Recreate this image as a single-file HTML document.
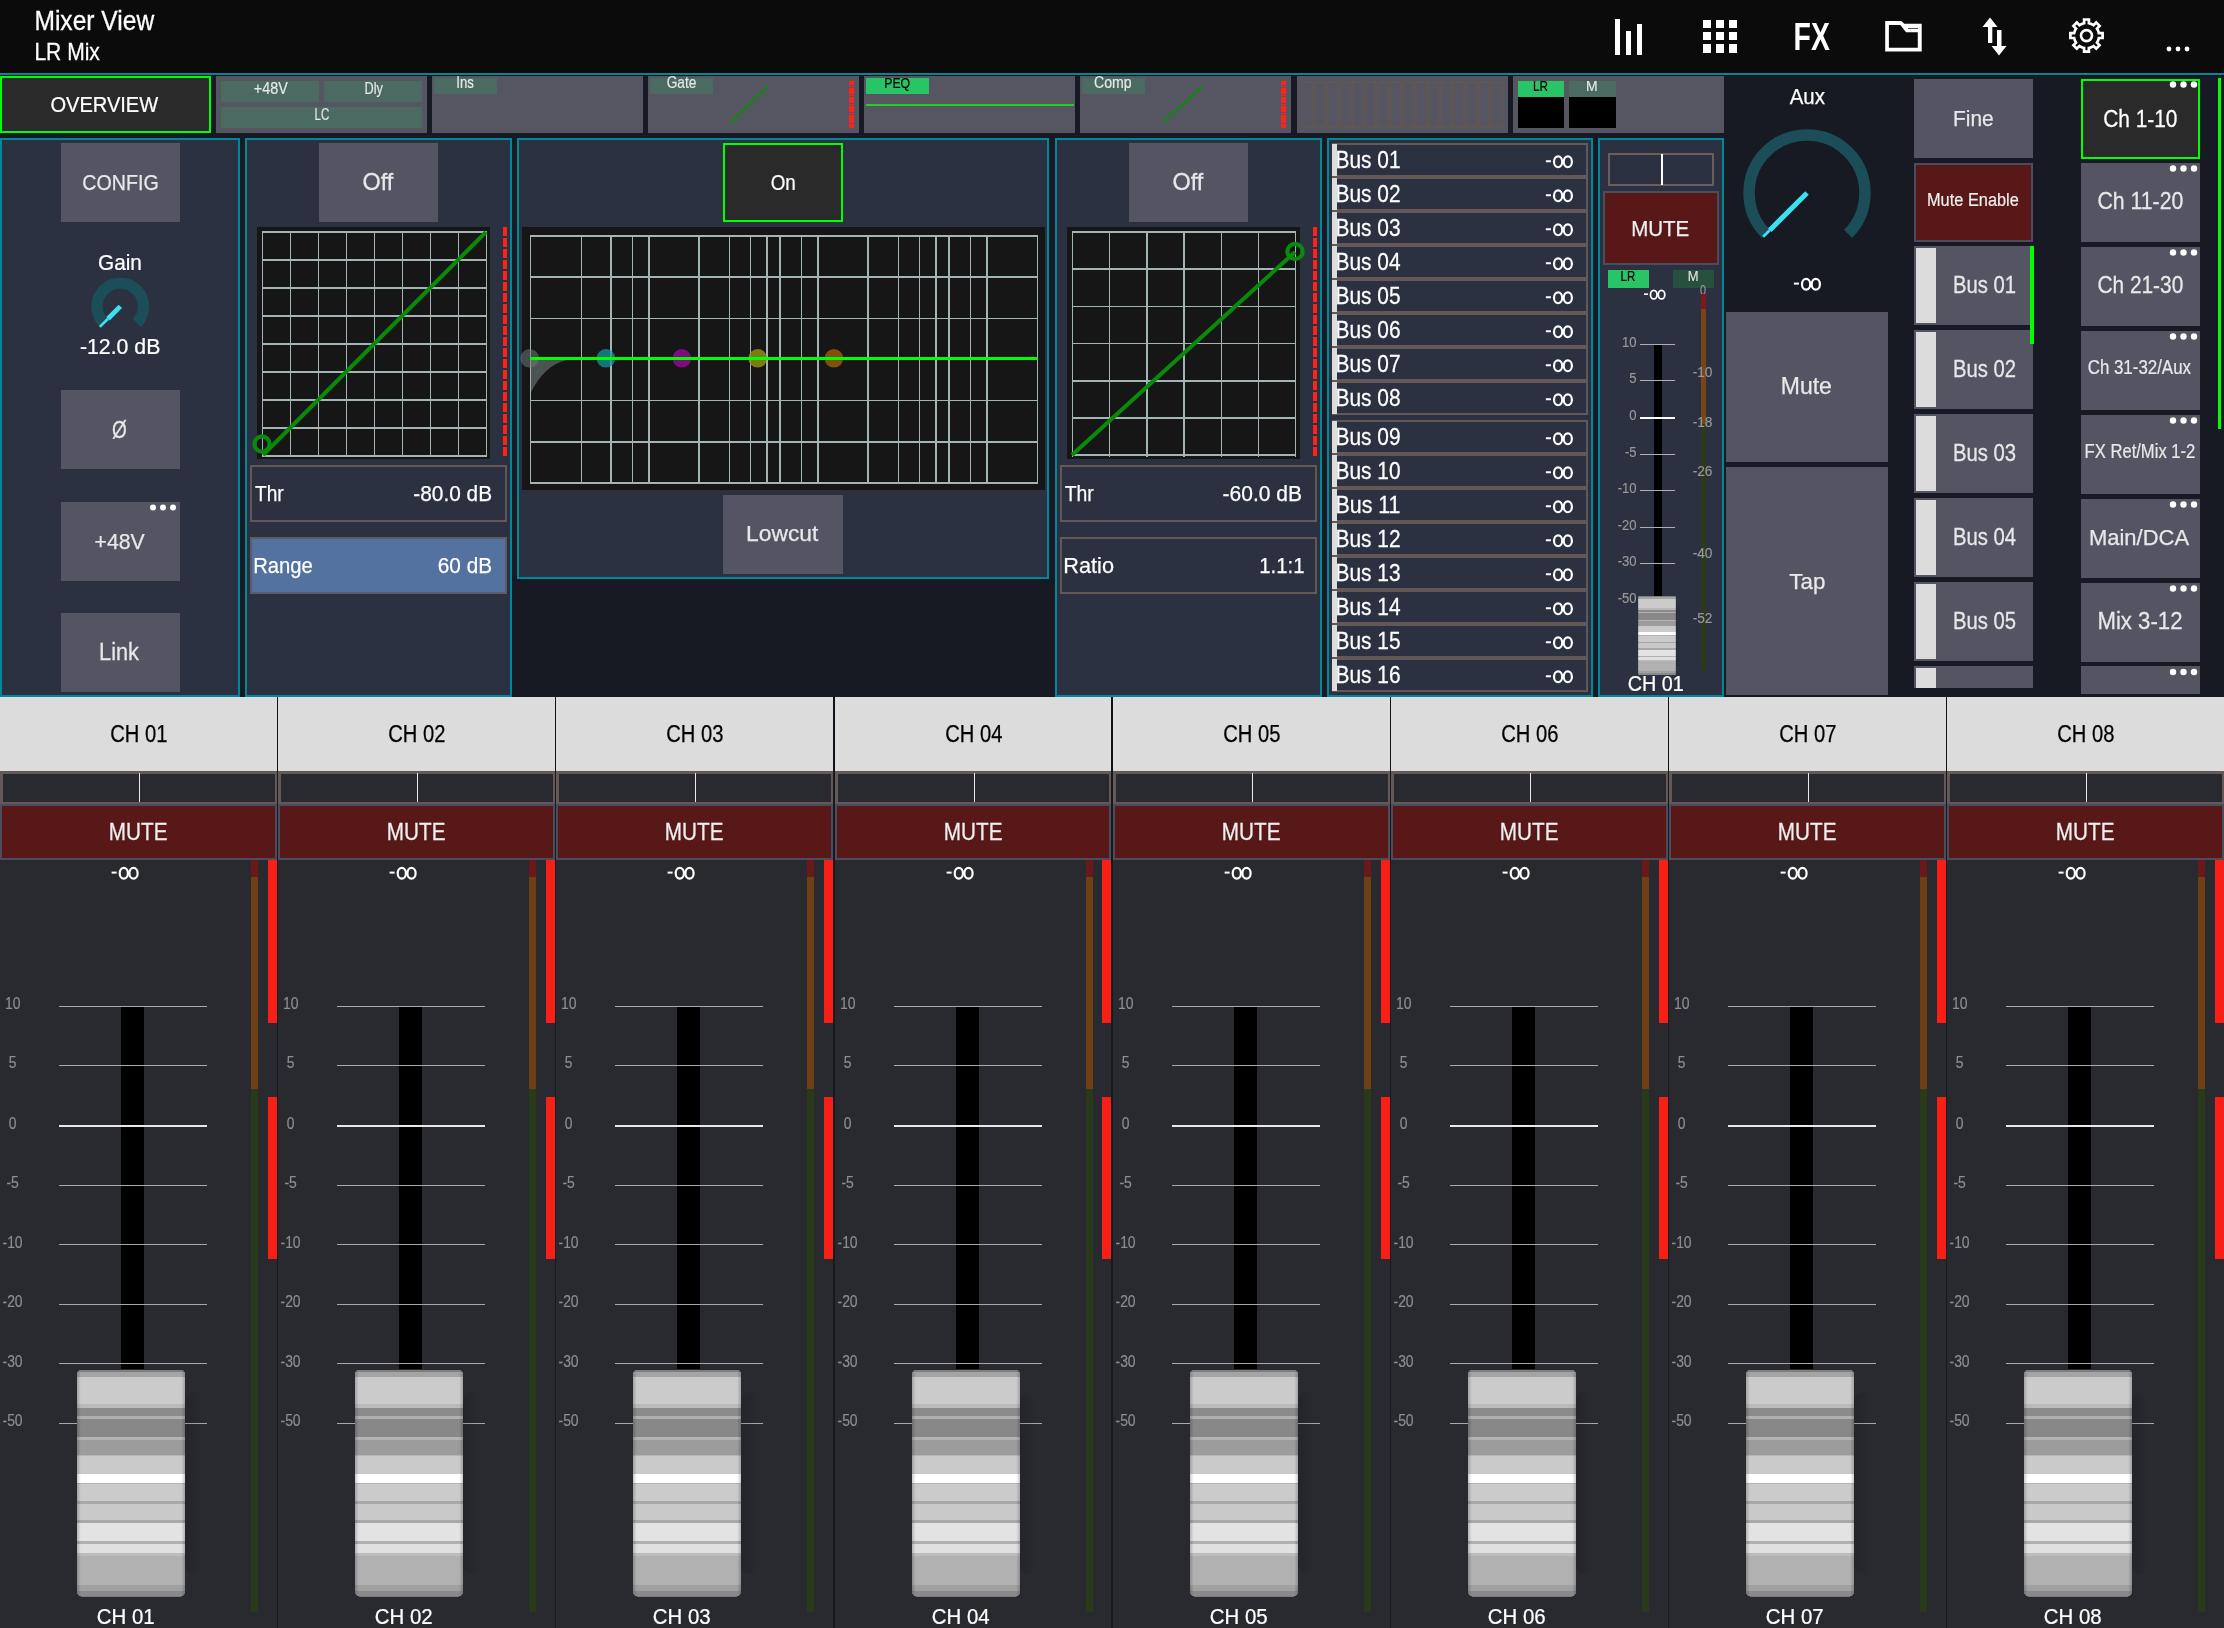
<!DOCTYPE html>
<html><head><meta charset="utf-8"><title>Mixer View</title>
<style>
html,body{margin:0;padding:0;background:#171a22;overflow:hidden;}
svg{display:block;font-family:"Liberation Sans",sans-serif;will-change:transform;}
rect{shape-rendering:crispEdges;}
</style></head><body>
<svg width="2224" height="1628" viewBox="0 0 2224 1628">
<defs><linearGradient id="shd" x1="0" x2="1" y1="0" y2="0"><stop offset="0" stop-color="#000" stop-opacity="0.12"/><stop offset="1" stop-color="#000" stop-opacity="0"/></linearGradient><linearGradient id="kedge" x1="0" x2="1" y1="0" y2="0"><stop offset="0" stop-color="#000" stop-opacity="0.2"/><stop offset="0.035" stop-color="#000" stop-opacity="0"/><stop offset="0.965" stop-color="#000" stop-opacity="0"/><stop offset="1" stop-color="#000" stop-opacity="0.2"/></linearGradient></defs>
<g>
<rect x="0" y="0" width="2224" height="1628" fill="#171a22" />
<rect x="0" y="0" width="2224" height="73" fill="#0b0b0b" />
<rect x="0" y="73" width="2224" height="2" fill="#01879a" />
<rect x="0" y="75" width="2224" height="1" fill="#0b0b0b" />
<text x="34.4" y="29.9" font-size="27.76" fill="#fff" stroke="#fff" stroke-width="0.30" textLength="119.8" lengthAdjust="spacingAndGlyphs">Mixer View</text>
<text x="34.4" y="60.0" font-size="23.40" fill="#fff" stroke="#fff" stroke-width="0.26" textLength="65.5" lengthAdjust="spacingAndGlyphs">LR Mix</text>
<rect x="1615" y="19" width="5" height="36" fill="#fff" />
<rect x="1626" y="31" width="5" height="24" fill="#fff" />
<rect x="1637" y="24" width="5" height="31" fill="#fff" />
<rect x="1703" y="20.0" width="8" height="8.2" fill="#fff" />
<rect x="1716" y="20.0" width="8" height="8.2" fill="#fff" />
<rect x="1729" y="20.0" width="8" height="8.2" fill="#fff" />
<rect x="1703" y="32.2" width="8" height="8.2" fill="#fff" />
<rect x="1716" y="32.2" width="8" height="8.2" fill="#fff" />
<rect x="1729" y="32.2" width="8" height="8.2" fill="#fff" />
<rect x="1703" y="44.4" width="8" height="8.2" fill="#fff" />
<rect x="1716" y="44.4" width="8" height="8.2" fill="#fff" />
<rect x="1729" y="44.4" width="8" height="8.2" fill="#fff" />
<text x="1793.6" y="49.8" font-size="38.95" fill="#fff" textLength="36.2" lengthAdjust="spacingAndGlyphs" font-weight="bold">FX</text>
<path fill-rule="evenodd" fill="#fff" d="M1885.2 21.1 L1901.4 21.1 L1904.3 23.8 L1921.7 23.8 L1921.7 51.6 L1885.2 51.6 Z M1888.9 24.9 L1900.4 24.9 L1906 32.3 L1917.8 32.3 L1917.8 47.8 L1888.9 47.8 Z"/>
<rect x="1908" y="27.8" width="10" height="1.2" fill="#555"/>
<path d="M1990 17.5 L1997.5 27 H1992.3 V43 H1988 V27 H1982.5 Z" fill="#fff"/>
<path d="M1999 55.5 L2006.5 46 H2001.5 V30 H1997 V46 H1991.5 Z" fill="#fff"/>
<path d="M2084.10 23.23 L2084.10 19.50 L2088.90 19.50 L2088.90 23.23 A12.6 12.6 0 0 1 2093.55 25.16 L2096.19 22.52 L2099.58 25.91 L2096.94 28.55 A12.6 12.6 0 0 1 2098.87 33.20 L2102.60 33.20 L2102.60 38.00 L2098.87 38.00 A12.6 12.6 0 0 1 2096.94 42.65 L2099.58 45.29 L2096.19 48.68 L2093.55 46.04 A12.6 12.6 0 0 1 2088.90 47.97 L2088.90 51.70 L2084.10 51.70 L2084.10 47.97 A12.6 12.6 0 0 1 2079.45 46.04 L2076.81 48.68 L2073.42 45.29 L2076.06 42.65 A12.6 12.6 0 0 1 2074.13 38.00 L2070.40 38.00 L2070.40 33.20 L2074.13 33.20 A12.6 12.6 0 0 1 2076.06 28.55 L2073.42 25.91 L2076.81 22.52 L2079.45 25.16 A12.6 12.6 0 0 1 2084.10 23.23 Z" fill="none" stroke="#fff" stroke-width="2.7" stroke-linejoin="miter"/>
<circle cx="2086.5" cy="35.6" r="5.5" fill="none" stroke="#fff" stroke-width="2.6"/>
<circle cx="2169" cy="49" r="2.4" fill="#fff"/>
<circle cx="2178" cy="49" r="2.4" fill="#fff"/>
<circle cx="2187" cy="49" r="2.4" fill="#fff"/>
<rect x="0" y="76" width="211" height="57" fill="#00ff00" />
<rect x="2" y="78" width="207" height="53" fill="#2a2a2a" />
<text x="50.4" y="111.6" font-size="21.95" fill="#fff" stroke="#fff" stroke-width="0.24" textLength="107.8" lengthAdjust="spacingAndGlyphs">OVERVIEW</text>
<rect x="216" y="76" width="211" height="57" fill="#565663" />
<rect x="432" y="76" width="211" height="57" fill="#565663" />
<rect x="648" y="76" width="211" height="57" fill="#565663" />
<rect x="864" y="76" width="211" height="57" fill="#565663" />
<rect x="1080" y="76" width="211" height="57" fill="#565663" />
<rect x="1297" y="76" width="211" height="57" fill="#565663" />
<rect x="1513" y="76" width="211" height="57" fill="#565663" />
<rect x="221" y="81" width="98" height="21" fill="#4b6b62" />
<rect x="324" y="81" width="98" height="21" fill="#4b6b62" />
<rect x="221" y="107" width="201" height="21" fill="#4b6b62" />
<text x="253.8" y="93.9" font-size="15.70" fill="#e8e8e8" stroke="#e8e8e8" stroke-width="0.17" textLength="33.9" lengthAdjust="spacingAndGlyphs">+48V</text>
<text x="364.6" y="93.9" font-size="15.70" fill="#e8e8e8" stroke="#e8e8e8" stroke-width="0.17" textLength="18.4" lengthAdjust="spacingAndGlyphs">Dly</text>
<text x="314.6" y="120.0" font-size="15.84" fill="#e8e8e8" stroke="#e8e8e8" stroke-width="0.17" textLength="14.8" lengthAdjust="spacingAndGlyphs">LC</text>
<rect x="434" y="78" width="63" height="16" fill="#4b6b62" />
<text x="456.3" y="87.9" font-size="15.70" fill="#e8e8e8" stroke="#e8e8e8" stroke-width="0.17" textLength="17.5" lengthAdjust="spacingAndGlyphs">Ins</text>
<rect x="650" y="78" width="63" height="16" fill="#4b6b62" />
<text x="666.7" y="87.9" font-size="15.70" fill="#e8e8e8" stroke="#e8e8e8" stroke-width="0.17" textLength="29.7" lengthAdjust="spacingAndGlyphs">Gate</text>
<line x1="730" y1="123.5" x2="768" y2="86" stroke="#0a8a0a" stroke-width="2" />
<rect x="849" y="81" width="5" height="4" fill="#ff2216" />
<rect x="849" y="86" width="5" height="1" fill="#ff2216" />
<rect x="849" y="88" width="5" height="6" fill="#ff2216" />
<rect x="849" y="95" width="5" height="1" fill="#ff2216" />
<rect x="849" y="97" width="5" height="6" fill="#ff2216" />
<rect x="849" y="104" width="5" height="1" fill="#ff2216" />
<rect x="849" y="106" width="5" height="6" fill="#ff2216" />
<rect x="849" y="113" width="5" height="1" fill="#ff2216" />
<rect x="849" y="115" width="5" height="8" fill="#ff2216" />
<rect x="849" y="124" width="5" height="4" fill="#ff2216" />
<rect x="866" y="78" width="63" height="16" fill="#28c466" />
<text x="884.2" y="88.2" font-size="15.41" fill="#000" stroke="#000" stroke-width="0.17" textLength="26.0" lengthAdjust="spacingAndGlyphs">PEQ</text>
<rect x="866" y="104" width="208" height="1.6" fill="#1fd41f" />
<rect x="1082" y="78" width="63" height="16" fill="#4b6b62" />
<text x="1094.0" y="87.9" font-size="15.70" fill="#e8e8e8" stroke="#e8e8e8" stroke-width="0.17" textLength="37.7" lengthAdjust="spacingAndGlyphs">Comp</text>
<line x1="1162" y1="123.3" x2="1202.5" y2="86.5" stroke="#0a8a0a" stroke-width="2" />
<rect x="1281" y="81" width="5" height="4" fill="#ff2216" />
<rect x="1281" y="86" width="5" height="1" fill="#ff2216" />
<rect x="1281" y="88" width="5" height="6" fill="#ff2216" />
<rect x="1281" y="95" width="5" height="1" fill="#ff2216" />
<rect x="1281" y="97" width="5" height="6" fill="#ff2216" />
<rect x="1281" y="104" width="5" height="1" fill="#ff2216" />
<rect x="1281" y="106" width="5" height="6" fill="#ff2216" />
<rect x="1281" y="113" width="5" height="1" fill="#ff2216" />
<rect x="1281" y="115" width="5" height="8" fill="#ff2216" />
<rect x="1281" y="124" width="5" height="4" fill="#ff2216" />
<rect x="1302.2" y="82.1" width="10" height="45" fill="none" stroke="#615755" stroke-width="1.8" style="shape-rendering:auto"/>
<rect x="1314.9" y="82.1" width="10" height="45" fill="none" stroke="#615755" stroke-width="1.8" style="shape-rendering:auto"/>
<rect x="1327.5" y="82.1" width="10" height="45" fill="none" stroke="#615755" stroke-width="1.8" style="shape-rendering:auto"/>
<rect x="1340.2" y="82.1" width="10" height="45" fill="none" stroke="#615755" stroke-width="1.8" style="shape-rendering:auto"/>
<rect x="1352.8" y="82.1" width="10" height="45" fill="none" stroke="#615755" stroke-width="1.8" style="shape-rendering:auto"/>
<rect x="1365.5" y="82.1" width="10" height="45" fill="none" stroke="#615755" stroke-width="1.8" style="shape-rendering:auto"/>
<rect x="1378.1" y="82.1" width="10" height="45" fill="none" stroke="#615755" stroke-width="1.8" style="shape-rendering:auto"/>
<rect x="1390.8" y="82.1" width="10" height="45" fill="none" stroke="#615755" stroke-width="1.8" style="shape-rendering:auto"/>
<rect x="1403.4" y="82.1" width="10" height="45" fill="none" stroke="#615755" stroke-width="1.8" style="shape-rendering:auto"/>
<rect x="1416.0" y="82.1" width="10" height="45" fill="none" stroke="#615755" stroke-width="1.8" style="shape-rendering:auto"/>
<rect x="1428.7" y="82.1" width="10" height="45" fill="none" stroke="#615755" stroke-width="1.8" style="shape-rendering:auto"/>
<rect x="1441.4" y="82.1" width="10" height="45" fill="none" stroke="#615755" stroke-width="1.8" style="shape-rendering:auto"/>
<rect x="1454.0" y="82.1" width="10" height="45" fill="none" stroke="#615755" stroke-width="1.8" style="shape-rendering:auto"/>
<rect x="1466.7" y="82.1" width="10" height="45" fill="none" stroke="#615755" stroke-width="1.8" style="shape-rendering:auto"/>
<rect x="1479.3" y="82.1" width="10" height="45" fill="none" stroke="#615755" stroke-width="1.8" style="shape-rendering:auto"/>
<rect x="1492.0" y="82.1" width="10" height="45" fill="none" stroke="#615755" stroke-width="1.8" style="shape-rendering:auto"/>
<rect x="1518" y="81" width="46" height="16" fill="#28c466" />
<rect x="1518" y="97" width="46" height="31" fill="#000" />
<rect x="1569" y="81" width="47" height="16" fill="#4b6b62" />
<rect x="1569" y="97" width="47" height="31" fill="#000" />
<text x="1533.0" y="91.2" font-size="14.97" fill="#000" stroke="#000" stroke-width="0.16" textLength="15.0" lengthAdjust="spacingAndGlyphs">LR</text>
<text x="1586.0" y="91.2" font-size="14.97" fill="#e8e8e8" stroke="#e8e8e8" stroke-width="0.16" textLength="11.6" lengthAdjust="spacingAndGlyphs">M</text>
<rect x="0" y="138" width="240" height="559" fill="#01879a" />
<rect x="2" y="140" width="236" height="555" fill="#2b3140" />
<rect x="245" y="138" width="267" height="559" fill="#01879a" />
<rect x="247" y="140" width="263" height="555" fill="#2b3140" />
<rect x="517" y="138" width="532" height="441" fill="#01879a" />
<rect x="519" y="140" width="528" height="437" fill="#2b3140" />
<rect x="1055" y="138" width="267" height="559" fill="#01879a" />
<rect x="1057" y="140" width="263" height="555" fill="#2b3140" />
<rect x="1327" y="138" width="266" height="559" fill="#01879a" />
<rect x="1329" y="140" width="262" height="555" fill="#2b3140" />
<rect x="1598" y="138" width="126" height="559" fill="#01879a" />
<rect x="1600" y="140" width="122" height="555" fill="#2b3140" />
<rect x="61" y="143" width="119" height="79" fill="#545462" />
<text x="82.3" y="190.2" font-size="22.82" fill="#e8e8e8" stroke="#e8e8e8" stroke-width="0.25" textLength="76.4" lengthAdjust="spacingAndGlyphs">CONFIG</text>
<text x="98.0" y="270.1" font-size="21.95" fill="#fff" stroke="#fff" stroke-width="0.24" textLength="43.9" lengthAdjust="spacingAndGlyphs">Gain</text>
<path d="M103.82 322.88 A23.3 23.3 0 1 1 136.78 322.88" fill="none" stroke="#1b4e58" stroke-width="11.399999999999999"/>
<line x1="120.3" y1="306.4" x2="108.00" y2="318.70" stroke="#3de0f2" stroke-width="4.8"/>
<line x1="108.00" y1="318.70" x2="99.79" y2="326.91" stroke="#3de0f2" stroke-width="2.64"/>
<text x="79.9" y="354.2" font-size="21.95" fill="#fff" stroke="#fff" stroke-width="0.24" textLength="80.5" lengthAdjust="spacingAndGlyphs">-12.0 dB</text>
<rect x="61" y="390" width="119" height="79" fill="#545462" />
<text x="112.0" y="437.5" font-size="24.42" fill="#e8e8e8" stroke="#e8e8e8" stroke-width="0.27" textLength="14.8" lengthAdjust="spacingAndGlyphs">Ø</text>
<rect x="61" y="502" width="119" height="79" fill="#545462" />
<text x="94.6" y="549.3" font-size="22.53" fill="#e8e8e8" stroke="#e8e8e8" stroke-width="0.25" textLength="50.1" lengthAdjust="spacingAndGlyphs">+48V</text>
<circle cx="153" cy="507.5" r="3" fill="#fff"/>
<circle cx="163" cy="507.5" r="3" fill="#fff"/>
<circle cx="173" cy="507.5" r="3" fill="#fff"/>
<rect x="61" y="613" width="119" height="79" fill="#545462" />
<text x="99.1" y="660.0" font-size="23.55" fill="#e8e8e8" stroke="#e8e8e8" stroke-width="0.26" textLength="39.9" lengthAdjust="spacingAndGlyphs">Link</text>
<rect x="319" y="143" width="119" height="79" fill="#545462" />
<text x="362.5" y="190.2" font-size="23.84" fill="#e8e8e8" stroke="#e8e8e8" stroke-width="0.26" textLength="30.8" lengthAdjust="spacingAndGlyphs">Off</text>
<rect x="257" y="227" width="233" height="232" fill="#161616" />
<rect x="261.75" y="231" width="1.5" height="226" fill="#a2b4b4" />
<rect x="289.75" y="231" width="1.5" height="226" fill="#a2b4b4" />
<rect x="317.75" y="231" width="1.5" height="226" fill="#a2b4b4" />
<rect x="345.75" y="231" width="1.5" height="226" fill="#a2b4b4" />
<rect x="373.75" y="231" width="1.5" height="226" fill="#a2b4b4" />
<rect x="401.75" y="231" width="1.5" height="226" fill="#a2b4b4" />
<rect x="429.75" y="231" width="1.5" height="226" fill="#a2b4b4" />
<rect x="457.75" y="231" width="1.5" height="226" fill="#a2b4b4" />
<rect x="485.75" y="231" width="1.5" height="226" fill="#a2b4b4" />
<rect x="262" y="231.25" width="225" height="1.5" fill="#a2b4b4" />
<rect x="262" y="259.25" width="225" height="1.5" fill="#a2b4b4" />
<rect x="262" y="287.25" width="225" height="1.5" fill="#a2b4b4" />
<rect x="262" y="315.25" width="225" height="1.5" fill="#a2b4b4" />
<rect x="262" y="343.25" width="225" height="1.5" fill="#a2b4b4" />
<rect x="262" y="371.25" width="225" height="1.5" fill="#a2b4b4" />
<rect x="262" y="399.25" width="225" height="1.5" fill="#a2b4b4" />
<rect x="262" y="427.25" width="225" height="1.5" fill="#a2b4b4" />
<rect x="262" y="455.25" width="225" height="1.5" fill="#a2b4b4" />
<rect x="503" y="227" width="4" height="9" fill="#ff2216" />
<rect x="503" y="238" width="4" height="9" fill="#ff2216" />
<rect x="503" y="249" width="4" height="9" fill="#ff2216" />
<rect x="503" y="260" width="4" height="9" fill="#ff2216" />
<rect x="503" y="271" width="4" height="9" fill="#ff2216" />
<rect x="503" y="282" width="4" height="9" fill="#ff2216" />
<rect x="503" y="293" width="4" height="9" fill="#ff2216" />
<rect x="503" y="304" width="4" height="9" fill="#ff2216" />
<rect x="503" y="315" width="4" height="9" fill="#ff2216" />
<rect x="503" y="326" width="4" height="9" fill="#ff2216" />
<rect x="503" y="337" width="4" height="9" fill="#ff2216" />
<rect x="503" y="348" width="4" height="9" fill="#ff2216" />
<rect x="503" y="359" width="4" height="9" fill="#ff2216" />
<rect x="503" y="370" width="4" height="9" fill="#ff2216" />
<rect x="503" y="381" width="4" height="9" fill="#ff2216" />
<rect x="503" y="392" width="4" height="9" fill="#ff2216" />
<rect x="503" y="403" width="4" height="9" fill="#ff2216" />
<rect x="503" y="414" width="4" height="9" fill="#ff2216" />
<rect x="503" y="425" width="4" height="9" fill="#ff2216" />
<rect x="503" y="436" width="4" height="9" fill="#ff2216" />
<rect x="503" y="447" width="4" height="9" fill="#ff2216" />
<line x1="263" y1="455" x2="486" y2="232" stroke="#0a8a0a" stroke-width="4" />
<circle cx="262" cy="444" r="7.6" fill="none" stroke="#0a8a0a" stroke-width="4.2"/>
<rect x="250" y="465" width="257" height="57" fill="#645856" />
<rect x="252" y="467" width="253" height="53" fill="#2b3140" />
<text x="255.0" y="501.3" font-size="22.97" fill="#fff" stroke="#fff" stroke-width="0.25" textLength="28.7" lengthAdjust="spacingAndGlyphs">Thr</text>
<text x="413.3" y="501.3" font-size="22.97" fill="#fff" stroke="#fff" stroke-width="0.25" textLength="78.8" lengthAdjust="spacingAndGlyphs">-80.0 dB</text>
<rect x="250" y="537" width="257" height="57" fill="#5f5a66" />
<rect x="252" y="539" width="253" height="53" fill="#5472a0" />
<text x="253.2" y="573.1" font-size="22.97" fill="#fff" stroke="#fff" stroke-width="0.25" textLength="59.6" lengthAdjust="spacingAndGlyphs">Range</text>
<text x="437.8" y="573.1" font-size="22.97" fill="#fff" stroke="#fff" stroke-width="0.25" textLength="54.3" lengthAdjust="spacingAndGlyphs">60 dB</text>
<rect x="723" y="143" width="120" height="79" fill="#00ff00" />
<rect x="725" y="145" width="116" height="75" fill="#2a2a2a" />
<text x="770.7" y="190.0" font-size="22.24" fill="#fff" stroke="#fff" stroke-width="0.24" textLength="25.1" lengthAdjust="spacingAndGlyphs">On</text>
<rect x="521.5" y="227" width="523.5" height="263" fill="#161616" />
<rect x="529.75" y="235" width="1.5" height="249" fill="#a2b4b4" />
<rect x="580.75" y="235" width="1.5" height="249" fill="#a2b4b4" />
<rect x="610.25" y="235" width="1.5" height="249" fill="#a2b4b4" />
<rect x="631.75" y="235" width="1.5" height="249" fill="#a2b4b4" />
<rect x="648.25" y="235" width="1.5" height="249" fill="#a2b4b4" />
<rect x="698.25" y="235" width="1.5" height="249" fill="#a2b4b4" />
<rect x="728.65" y="235" width="1.5" height="249" fill="#a2b4b4" />
<rect x="749.75" y="235" width="1.5" height="249" fill="#a2b4b4" />
<rect x="766.15" y="235" width="1.5" height="249" fill="#a2b4b4" />
<rect x="779.25" y="235" width="1.5" height="249" fill="#a2b4b4" />
<rect x="800.55" y="235" width="1.5" height="249" fill="#a2b4b4" />
<rect x="817.35" y="235" width="1.5" height="249" fill="#a2b4b4" />
<rect x="867.45" y="235" width="1.5" height="249" fill="#a2b4b4" />
<rect x="897.75" y="235" width="1.5" height="249" fill="#a2b4b4" />
<rect x="918.65" y="235" width="1.5" height="249" fill="#a2b4b4" />
<rect x="935.05" y="235" width="1.5" height="249" fill="#a2b4b4" />
<rect x="948.35" y="235" width="1.5" height="249" fill="#a2b4b4" />
<rect x="969.95" y="235" width="1.5" height="249" fill="#a2b4b4" />
<rect x="986.25" y="235" width="1.5" height="249" fill="#a2b4b4" />
<rect x="1036.55" y="235" width="1.5" height="249" fill="#a2b4b4" />
<rect x="530" y="235.25" width="508" height="1.5" fill="#a2b4b4" />
<rect x="530" y="276.45" width="508" height="1.5" fill="#a2b4b4" />
<rect x="530" y="317.75" width="508" height="1.5" fill="#a2b4b4" />
<rect x="530" y="358.75" width="508" height="1.5" fill="#a2b4b4" />
<rect x="530" y="399.75" width="508" height="1.5" fill="#a2b4b4" />
<rect x="530" y="441.05" width="508" height="1.5" fill="#a2b4b4" />
<rect x="530" y="482.25" width="508" height="1.5" fill="#a2b4b4" />
<path d="M531 360 L567 360 C550 364 540 375 531 392 Z" fill="#4c5453"/>
<circle cx="529.7" cy="358.3" r="9.3" fill="rgba(110,120,120,0.55)"/>
<circle cx="605.9" cy="358.3" r="9.3" fill="rgba(20,150,160,0.75)"/>
<circle cx="681.8" cy="358.3" r="9.3" fill="rgba(140,10,140,0.9)"/>
<circle cx="757.7" cy="358.3" r="9.3" fill="rgba(150,150,20,0.8)"/>
<circle cx="833.9" cy="358.3" r="9.3" fill="rgba(150,90,10,0.85)"/>
<rect x="530" y="357" width="508" height="3" fill="#00ff00" />
<rect x="723" y="495" width="120" height="79" fill="#545462" />
<text x="746.1" y="541.4" font-size="22.38" fill="#e8e8e8" stroke="#e8e8e8" stroke-width="0.25" textLength="72.2" lengthAdjust="spacingAndGlyphs">Lowcut</text>
<rect x="1129" y="143" width="119" height="79" fill="#545462" />
<text x="1172.5" y="190.2" font-size="23.84" fill="#e8e8e8" stroke="#e8e8e8" stroke-width="0.26" textLength="30.8" lengthAdjust="spacingAndGlyphs">Off</text>
<rect x="1067" y="227" width="233" height="232" fill="#161616" />
<rect x="1071.75" y="231" width="1.5" height="226" fill="#a2b4b4" />
<rect x="1108.95" y="231" width="1.5" height="226" fill="#a2b4b4" />
<rect x="1146.15" y="231" width="1.5" height="226" fill="#a2b4b4" />
<rect x="1183.35" y="231" width="1.5" height="226" fill="#a2b4b4" />
<rect x="1220.55" y="231" width="1.5" height="226" fill="#a2b4b4" />
<rect x="1257.75" y="231" width="1.5" height="226" fill="#a2b4b4" />
<rect x="1294.95" y="231" width="1.5" height="226" fill="#a2b4b4" />
<rect x="1072" y="231.25" width="224" height="1.5" fill="#a2b4b4" />
<rect x="1072" y="268.45" width="224" height="1.5" fill="#a2b4b4" />
<rect x="1072" y="305.65" width="224" height="1.5" fill="#a2b4b4" />
<rect x="1072" y="342.85" width="224" height="1.5" fill="#a2b4b4" />
<rect x="1072" y="380.05" width="224" height="1.5" fill="#a2b4b4" />
<rect x="1072" y="417.25" width="224" height="1.5" fill="#a2b4b4" />
<rect x="1072" y="454.45000000000005" width="224" height="1.5" fill="#a2b4b4" />
<rect x="1312.5" y="227" width="4" height="9" fill="#ff2216" />
<rect x="1312.5" y="238" width="4" height="9" fill="#ff2216" />
<rect x="1312.5" y="249" width="4" height="9" fill="#ff2216" />
<rect x="1312.5" y="260" width="4" height="9" fill="#ff2216" />
<rect x="1312.5" y="271" width="4" height="9" fill="#ff2216" />
<rect x="1312.5" y="282" width="4" height="9" fill="#ff2216" />
<rect x="1312.5" y="293" width="4" height="9" fill="#ff2216" />
<rect x="1312.5" y="304" width="4" height="9" fill="#ff2216" />
<rect x="1312.5" y="315" width="4" height="9" fill="#ff2216" />
<rect x="1312.5" y="326" width="4" height="9" fill="#ff2216" />
<rect x="1312.5" y="337" width="4" height="9" fill="#ff2216" />
<rect x="1312.5" y="348" width="4" height="9" fill="#ff2216" />
<rect x="1312.5" y="359" width="4" height="9" fill="#ff2216" />
<rect x="1312.5" y="370" width="4" height="9" fill="#ff2216" />
<rect x="1312.5" y="381" width="4" height="9" fill="#ff2216" />
<rect x="1312.5" y="392" width="4" height="9" fill="#ff2216" />
<rect x="1312.5" y="403" width="4" height="9" fill="#ff2216" />
<rect x="1312.5" y="414" width="4" height="9" fill="#ff2216" />
<rect x="1312.5" y="425" width="4" height="9" fill="#ff2216" />
<rect x="1312.5" y="436" width="4" height="9" fill="#ff2216" />
<rect x="1312.5" y="447" width="4" height="9" fill="#ff2216" />
<line x1="1072" y1="455" x2="1295" y2="252" stroke="#0a8a0a" stroke-width="4" />
<circle cx="1295" cy="251.5" r="7.6" fill="none" stroke="#0a8a0a" stroke-width="4.2"/>
<rect x="1060" y="465" width="257" height="57" fill="#645856" />
<rect x="1062" y="467" width="253" height="53" fill="#2b3140" />
<text x="1064.7" y="501.0" font-size="22.82" fill="#fff" stroke="#fff" stroke-width="0.25" textLength="29.1" lengthAdjust="spacingAndGlyphs">Thr</text>
<text x="1222.6" y="501.0" font-size="22.82" fill="#fff" stroke="#fff" stroke-width="0.25" textLength="79.4" lengthAdjust="spacingAndGlyphs">-60.0 dB</text>
<rect x="1060" y="537" width="257" height="57" fill="#645856" />
<rect x="1062" y="539" width="253" height="53" fill="#2b3140" />
<text x="1063.3" y="572.8" font-size="22.97" fill="#fff" stroke="#fff" stroke-width="0.25" textLength="50.7" lengthAdjust="spacingAndGlyphs">Ratio</text>
<text x="1259.3" y="572.8" font-size="22.97" fill="#fff" stroke="#fff" stroke-width="0.25" textLength="45.2" lengthAdjust="spacingAndGlyphs">1.1:1</text>
<rect x="1332" y="143" width="256" height="34" fill="#645856" />
<rect x="1334" y="145" width="252" height="30" fill="#2b3140" />
<rect x="1332" y="144" width="5" height="32" fill="#dcdcdc" />
<text x="1335.5" y="168.2" font-size="23.55" fill="#fff" stroke="#fff" stroke-width="0.26" textLength="65.0" lengthAdjust="spacingAndGlyphs">Bus 01</text>
<rect x="1545.90" y="160.25" width="5.00" height="2.00" fill="#fff" style="shape-rendering:auto"/>
<ellipse cx="1558.10" cy="161.85" rx="4.10" ry="5.40" fill="none" stroke="#fff" stroke-width="2.20"/>
<ellipse cx="1567.80" cy="161.85" rx="4.10" ry="5.40" fill="none" stroke="#fff" stroke-width="2.20"/>
<rect x="1332" y="177" width="256" height="34" fill="#645856" />
<rect x="1334" y="179" width="252" height="30" fill="#2b3140" />
<rect x="1332" y="178" width="5" height="32" fill="#dcdcdc" />
<text x="1335.5" y="202.2" font-size="23.55" fill="#fff" stroke="#fff" stroke-width="0.26" textLength="65.0" lengthAdjust="spacingAndGlyphs">Bus 02</text>
<rect x="1545.90" y="194.25" width="5.00" height="2.00" fill="#fff" style="shape-rendering:auto"/>
<ellipse cx="1558.10" cy="195.85" rx="4.10" ry="5.40" fill="none" stroke="#fff" stroke-width="2.20"/>
<ellipse cx="1567.80" cy="195.85" rx="4.10" ry="5.40" fill="none" stroke="#fff" stroke-width="2.20"/>
<rect x="1332" y="211" width="256" height="34" fill="#645856" />
<rect x="1334" y="213" width="252" height="30" fill="#2b3140" />
<rect x="1332" y="212" width="5" height="32" fill="#dcdcdc" />
<text x="1335.5" y="236.2" font-size="23.55" fill="#fff" stroke="#fff" stroke-width="0.26" textLength="65.0" lengthAdjust="spacingAndGlyphs">Bus 03</text>
<rect x="1545.90" y="228.25" width="5.00" height="2.00" fill="#fff" style="shape-rendering:auto"/>
<ellipse cx="1558.10" cy="229.85" rx="4.10" ry="5.40" fill="none" stroke="#fff" stroke-width="2.20"/>
<ellipse cx="1567.80" cy="229.85" rx="4.10" ry="5.40" fill="none" stroke="#fff" stroke-width="2.20"/>
<rect x="1332" y="245" width="256" height="34" fill="#645856" />
<rect x="1334" y="247" width="252" height="30" fill="#2b3140" />
<rect x="1332" y="246" width="5" height="32" fill="#dcdcdc" />
<text x="1335.5" y="270.2" font-size="23.55" fill="#fff" stroke="#fff" stroke-width="0.26" textLength="65.0" lengthAdjust="spacingAndGlyphs">Bus 04</text>
<rect x="1545.90" y="262.25" width="5.00" height="2.00" fill="#fff" style="shape-rendering:auto"/>
<ellipse cx="1558.10" cy="263.85" rx="4.10" ry="5.40" fill="none" stroke="#fff" stroke-width="2.20"/>
<ellipse cx="1567.80" cy="263.85" rx="4.10" ry="5.40" fill="none" stroke="#fff" stroke-width="2.20"/>
<rect x="1332" y="279" width="256" height="34" fill="#645856" />
<rect x="1334" y="281" width="252" height="30" fill="#2b3140" />
<rect x="1332" y="280" width="5" height="32" fill="#dcdcdc" />
<text x="1335.5" y="304.2" font-size="23.55" fill="#fff" stroke="#fff" stroke-width="0.26" textLength="65.0" lengthAdjust="spacingAndGlyphs">Bus 05</text>
<rect x="1545.90" y="296.25" width="5.00" height="2.00" fill="#fff" style="shape-rendering:auto"/>
<ellipse cx="1558.10" cy="297.85" rx="4.10" ry="5.40" fill="none" stroke="#fff" stroke-width="2.20"/>
<ellipse cx="1567.80" cy="297.85" rx="4.10" ry="5.40" fill="none" stroke="#fff" stroke-width="2.20"/>
<rect x="1332" y="313" width="256" height="34" fill="#645856" />
<rect x="1334" y="315" width="252" height="30" fill="#2b3140" />
<rect x="1332" y="314" width="5" height="32" fill="#dcdcdc" />
<text x="1335.5" y="338.2" font-size="23.55" fill="#fff" stroke="#fff" stroke-width="0.26" textLength="65.0" lengthAdjust="spacingAndGlyphs">Bus 06</text>
<rect x="1545.90" y="330.25" width="5.00" height="2.00" fill="#fff" style="shape-rendering:auto"/>
<ellipse cx="1558.10" cy="331.85" rx="4.10" ry="5.40" fill="none" stroke="#fff" stroke-width="2.20"/>
<ellipse cx="1567.80" cy="331.85" rx="4.10" ry="5.40" fill="none" stroke="#fff" stroke-width="2.20"/>
<rect x="1332" y="347" width="256" height="34" fill="#645856" />
<rect x="1334" y="349" width="252" height="30" fill="#2b3140" />
<rect x="1332" y="348" width="5" height="32" fill="#dcdcdc" />
<text x="1335.5" y="372.2" font-size="23.55" fill="#fff" stroke="#fff" stroke-width="0.26" textLength="65.0" lengthAdjust="spacingAndGlyphs">Bus 07</text>
<rect x="1545.90" y="364.25" width="5.00" height="2.00" fill="#fff" style="shape-rendering:auto"/>
<ellipse cx="1558.10" cy="365.85" rx="4.10" ry="5.40" fill="none" stroke="#fff" stroke-width="2.20"/>
<ellipse cx="1567.80" cy="365.85" rx="4.10" ry="5.40" fill="none" stroke="#fff" stroke-width="2.20"/>
<rect x="1332" y="381" width="256" height="34" fill="#645856" />
<rect x="1334" y="383" width="252" height="30" fill="#2b3140" />
<rect x="1332" y="382" width="5" height="32" fill="#dcdcdc" />
<text x="1335.5" y="406.2" font-size="23.55" fill="#fff" stroke="#fff" stroke-width="0.26" textLength="65.0" lengthAdjust="spacingAndGlyphs">Bus 08</text>
<rect x="1545.90" y="398.25" width="5.00" height="2.00" fill="#fff" style="shape-rendering:auto"/>
<ellipse cx="1558.10" cy="399.85" rx="4.10" ry="5.40" fill="none" stroke="#fff" stroke-width="2.20"/>
<ellipse cx="1567.80" cy="399.85" rx="4.10" ry="5.40" fill="none" stroke="#fff" stroke-width="2.20"/>
<rect x="1332" y="420" width="256" height="34" fill="#645856" />
<rect x="1334" y="422" width="252" height="30" fill="#2b3140" />
<rect x="1332" y="421" width="5" height="32" fill="#dcdcdc" />
<text x="1335.5" y="445.2" font-size="23.55" fill="#fff" stroke="#fff" stroke-width="0.26" textLength="65.0" lengthAdjust="spacingAndGlyphs">Bus 09</text>
<rect x="1545.90" y="437.25" width="5.00" height="2.00" fill="#fff" style="shape-rendering:auto"/>
<ellipse cx="1558.10" cy="438.85" rx="4.10" ry="5.40" fill="none" stroke="#fff" stroke-width="2.20"/>
<ellipse cx="1567.80" cy="438.85" rx="4.10" ry="5.40" fill="none" stroke="#fff" stroke-width="2.20"/>
<rect x="1332" y="454" width="256" height="34" fill="#645856" />
<rect x="1334" y="456" width="252" height="30" fill="#2b3140" />
<rect x="1332" y="455" width="5" height="32" fill="#dcdcdc" />
<text x="1335.5" y="479.2" font-size="23.55" fill="#fff" stroke="#fff" stroke-width="0.26" textLength="65.0" lengthAdjust="spacingAndGlyphs">Bus 10</text>
<rect x="1545.90" y="471.25" width="5.00" height="2.00" fill="#fff" style="shape-rendering:auto"/>
<ellipse cx="1558.10" cy="472.85" rx="4.10" ry="5.40" fill="none" stroke="#fff" stroke-width="2.20"/>
<ellipse cx="1567.80" cy="472.85" rx="4.10" ry="5.40" fill="none" stroke="#fff" stroke-width="2.20"/>
<rect x="1332" y="488" width="256" height="34" fill="#645856" />
<rect x="1334" y="490" width="252" height="30" fill="#2b3140" />
<rect x="1332" y="489" width="5" height="32" fill="#dcdcdc" />
<text x="1335.5" y="513.2" font-size="23.55" fill="#fff" stroke="#fff" stroke-width="0.26" textLength="65.0" lengthAdjust="spacingAndGlyphs">Bus 11</text>
<rect x="1545.90" y="505.25" width="5.00" height="2.00" fill="#fff" style="shape-rendering:auto"/>
<ellipse cx="1558.10" cy="506.85" rx="4.10" ry="5.40" fill="none" stroke="#fff" stroke-width="2.20"/>
<ellipse cx="1567.80" cy="506.85" rx="4.10" ry="5.40" fill="none" stroke="#fff" stroke-width="2.20"/>
<rect x="1332" y="522" width="256" height="34" fill="#645856" />
<rect x="1334" y="524" width="252" height="30" fill="#2b3140" />
<rect x="1332" y="523" width="5" height="32" fill="#dcdcdc" />
<text x="1335.5" y="547.2" font-size="23.55" fill="#fff" stroke="#fff" stroke-width="0.26" textLength="65.0" lengthAdjust="spacingAndGlyphs">Bus 12</text>
<rect x="1545.90" y="539.25" width="5.00" height="2.00" fill="#fff" style="shape-rendering:auto"/>
<ellipse cx="1558.10" cy="540.85" rx="4.10" ry="5.40" fill="none" stroke="#fff" stroke-width="2.20"/>
<ellipse cx="1567.80" cy="540.85" rx="4.10" ry="5.40" fill="none" stroke="#fff" stroke-width="2.20"/>
<rect x="1332" y="556" width="256" height="34" fill="#645856" />
<rect x="1334" y="558" width="252" height="30" fill="#2b3140" />
<rect x="1332" y="557" width="5" height="32" fill="#dcdcdc" />
<text x="1335.5" y="581.2" font-size="23.55" fill="#fff" stroke="#fff" stroke-width="0.26" textLength="65.0" lengthAdjust="spacingAndGlyphs">Bus 13</text>
<rect x="1545.90" y="573.25" width="5.00" height="2.00" fill="#fff" style="shape-rendering:auto"/>
<ellipse cx="1558.10" cy="574.85" rx="4.10" ry="5.40" fill="none" stroke="#fff" stroke-width="2.20"/>
<ellipse cx="1567.80" cy="574.85" rx="4.10" ry="5.40" fill="none" stroke="#fff" stroke-width="2.20"/>
<rect x="1332" y="590" width="256" height="34" fill="#645856" />
<rect x="1334" y="592" width="252" height="30" fill="#2b3140" />
<rect x="1332" y="591" width="5" height="32" fill="#dcdcdc" />
<text x="1335.5" y="615.2" font-size="23.55" fill="#fff" stroke="#fff" stroke-width="0.26" textLength="65.0" lengthAdjust="spacingAndGlyphs">Bus 14</text>
<rect x="1545.90" y="607.25" width="5.00" height="2.00" fill="#fff" style="shape-rendering:auto"/>
<ellipse cx="1558.10" cy="608.85" rx="4.10" ry="5.40" fill="none" stroke="#fff" stroke-width="2.20"/>
<ellipse cx="1567.80" cy="608.85" rx="4.10" ry="5.40" fill="none" stroke="#fff" stroke-width="2.20"/>
<rect x="1332" y="624" width="256" height="34" fill="#645856" />
<rect x="1334" y="626" width="252" height="30" fill="#2b3140" />
<rect x="1332" y="625" width="5" height="32" fill="#dcdcdc" />
<text x="1335.5" y="649.2" font-size="23.55" fill="#fff" stroke="#fff" stroke-width="0.26" textLength="65.0" lengthAdjust="spacingAndGlyphs">Bus 15</text>
<rect x="1545.90" y="641.25" width="5.00" height="2.00" fill="#fff" style="shape-rendering:auto"/>
<ellipse cx="1558.10" cy="642.85" rx="4.10" ry="5.40" fill="none" stroke="#fff" stroke-width="2.20"/>
<ellipse cx="1567.80" cy="642.85" rx="4.10" ry="5.40" fill="none" stroke="#fff" stroke-width="2.20"/>
<rect x="1332" y="658" width="256" height="34" fill="#645856" />
<rect x="1334" y="660" width="252" height="30" fill="#2b3140" />
<rect x="1332" y="659" width="5" height="32" fill="#dcdcdc" />
<text x="1335.5" y="683.2" font-size="23.55" fill="#fff" stroke="#fff" stroke-width="0.26" textLength="65.0" lengthAdjust="spacingAndGlyphs">Bus 16</text>
<rect x="1545.90" y="675.25" width="5.00" height="2.00" fill="#fff" style="shape-rendering:auto"/>
<ellipse cx="1558.10" cy="676.85" rx="4.10" ry="5.40" fill="none" stroke="#fff" stroke-width="2.20"/>
<ellipse cx="1567.80" cy="676.85" rx="4.10" ry="5.40" fill="none" stroke="#fff" stroke-width="2.20"/>
<rect x="1608" y="153" width="106" height="33" fill="#6b5e5a" />
<rect x="1610" y="155" width="102" height="29" fill="#2b3140" />
<rect x="1661" y="154" width="2" height="31" fill="#fff" />
<rect x="1603" y="191" width="116" height="74" fill="#4b4d5c" />
<rect x="1605" y="193" width="112" height="70" fill="#581818" />
<text x="1631.2" y="235.9" font-size="22.67" fill="#f0f0f0" stroke="#f0f0f0" stroke-width="0.25" textLength="58.1" lengthAdjust="spacingAndGlyphs">MUTE</text>
<rect x="1608" y="270" width="41" height="18" fill="#28c466" />
<rect x="1673" y="270" width="41" height="18" fill="#28503f" />
<text x="1620.5" y="280.9" font-size="14.83" fill="#000" stroke="#000" stroke-width="0.16" textLength="14.7" lengthAdjust="spacingAndGlyphs">LR</text>
<text x="1687.7" y="280.9" font-size="14.83" fill="#e0e0e0" stroke="#e0e0e0" stroke-width="0.16" textLength="10.8" lengthAdjust="spacingAndGlyphs">M</text>
<rect x="1644.00" y="293.37" width="4.00" height="1.60" fill="#fff" style="shape-rendering:auto"/>
<ellipse cx="1653.76" cy="294.65" rx="3.28" ry="4.32" fill="none" stroke="#fff" stroke-width="1.76"/>
<ellipse cx="1661.52" cy="294.65" rx="3.28" ry="4.32" fill="none" stroke="#fff" stroke-width="1.76"/>
<text x="1700.0" y="294.6" font-size="14.24" fill="#999" stroke="#999" stroke-width="0.16" textLength="6.0" lengthAdjust="spacingAndGlyphs">0</text>
<rect x="1701" y="294" width="5" height="15" fill="#7a1a1a" />
<rect x="1701" y="309" width="5" height="115" fill="#7a4416" />
<rect x="1701" y="424" width="5" height="247" fill="#2a3a1c" />
<rect x="1654" y="345" width="8" height="252" fill="#000" />
<rect x="1640" y="344" width="35" height="1" fill="#b0b0b0" />
<text x="1622.0" y="346.8" font-size="14.54" fill="#999" stroke="#999" stroke-width="0.16" textLength="14.6" lengthAdjust="spacingAndGlyphs">10</text>
<rect x="1640" y="380" width="35" height="1" fill="#b0b0b0" />
<text x="1629.3" y="383.1" font-size="14.54" fill="#999" stroke="#999" stroke-width="0.16" textLength="7.3" lengthAdjust="spacingAndGlyphs">5</text>
<rect x="1640" y="416.5" width="35" height="2" fill="#fff" />
<text x="1629.3" y="420.0" font-size="14.54" fill="#999" stroke="#999" stroke-width="0.16" textLength="7.3" lengthAdjust="spacingAndGlyphs">0</text>
<rect x="1640" y="454" width="35" height="1" fill="#b0b0b0" />
<text x="1625.0" y="457.1" font-size="14.54" fill="#999" stroke="#999" stroke-width="0.16" textLength="11.6" lengthAdjust="spacingAndGlyphs">-5</text>
<rect x="1640" y="490" width="35" height="1" fill="#b0b0b0" />
<text x="1617.7" y="493.4" font-size="14.54" fill="#999" stroke="#999" stroke-width="0.16" textLength="18.9" lengthAdjust="spacingAndGlyphs">-10</text>
<rect x="1640" y="527" width="35" height="1" fill="#b0b0b0" />
<text x="1617.7" y="530.3" font-size="14.54" fill="#999" stroke="#999" stroke-width="0.16" textLength="18.9" lengthAdjust="spacingAndGlyphs">-20</text>
<rect x="1640" y="563" width="35" height="1" fill="#b0b0b0" />
<text x="1617.7" y="566.3" font-size="14.54" fill="#999" stroke="#999" stroke-width="0.16" textLength="18.9" lengthAdjust="spacingAndGlyphs">-30</text>
<rect x="1640" y="600" width="35" height="1" fill="#b0b0b0" />
<text x="1617.7" y="602.8" font-size="14.54" fill="#999" stroke="#999" stroke-width="0.16" textLength="18.9" lengthAdjust="spacingAndGlyphs">-50</text>
<text x="1692.7" y="377.0" font-size="14.54" fill="#999" stroke="#999" stroke-width="0.16" textLength="19.8" lengthAdjust="spacingAndGlyphs">-10</text>
<text x="1692.7" y="426.5" font-size="14.54" fill="#999" stroke="#999" stroke-width="0.16" textLength="19.8" lengthAdjust="spacingAndGlyphs">-18</text>
<text x="1692.7" y="476.0" font-size="14.54" fill="#999" stroke="#999" stroke-width="0.16" textLength="19.8" lengthAdjust="spacingAndGlyphs">-26</text>
<text x="1692.7" y="558.0" font-size="14.54" fill="#999" stroke="#999" stroke-width="0.16" textLength="19.8" lengthAdjust="spacingAndGlyphs">-40</text>
<text x="1692.7" y="623.0" font-size="14.54" fill="#999" stroke="#999" stroke-width="0.16" textLength="19.8" lengthAdjust="spacingAndGlyphs">-52</text>
<rect x="1676.0" y="603.9" width="6.1" height="63.2" rx="3.0" fill="url(#shd)" style="shape-rendering:auto"/>
<clipPath id="kc1"><rect x="1638" y="596" width="38" height="79" rx="2.0" style="shape-rendering:auto"/></clipPath>
<g clip-path="url(#kc1)">
<rect x="1638" y="596" width="38" height="79" fill="#b1b1b1"/>
<rect x="1638" y="596.00" width="38" height="1.04" fill="#7e7e7e"/>
<rect x="1638" y="597.04" width="38" height="1.73" fill="#a4a4a4"/>
<rect x="1638" y="598.77" width="38" height="9.18" fill="#cbcbcb"/>
<rect x="1638" y="607.95" width="38" height="1.56" fill="#bababa"/>
<rect x="1638" y="609.51" width="38" height="2.77" fill="#8b8b8b"/>
<rect x="1638" y="612.29" width="38" height="1.04" fill="#b0b0b0"/>
<rect x="1638" y="613.32" width="38" height="6.24" fill="#888888"/>
<rect x="1638" y="619.56" width="38" height="1.04" fill="#b3b3b3"/>
<rect x="1638" y="620.60" width="38" height="5.02" fill="#9c9c9c"/>
<rect x="1638" y="625.62" width="38" height="0.52" fill="#b5b5b5"/>
<rect x="1638" y="626.14" width="38" height="6.06" fill="#cacaca"/>
<rect x="1638" y="632.21" width="38" height="3.12" fill="#ffffff"/>
<rect x="1638" y="635.33" width="38" height="0.35" fill="#b5b5b5"/>
<rect x="1638" y="635.67" width="38" height="6.24" fill="#cbcbcb"/>
<rect x="1638" y="641.91" width="38" height="1.04" fill="#a8a8a8"/>
<rect x="1638" y="642.95" width="38" height="5.54" fill="#c9c9c9"/>
<rect x="1638" y="648.49" width="38" height="1.04" fill="#a8a8a8"/>
<rect x="1638" y="649.53" width="38" height="6.06" fill="#e3e3e3"/>
<rect x="1638" y="655.60" width="38" height="1.04" fill="#b0b0b0"/>
<rect x="1638" y="656.64" width="38" height="3.12" fill="#e0e0e0"/>
<rect x="1638" y="659.75" width="38" height="1.04" fill="#bdbdbd"/>
<rect x="1638" y="660.79" width="38" height="10.05" fill="#b1b1b1"/>
<rect x="1638" y="670.84" width="38" height="2.08" fill="#a0a0a0"/>
<rect x="1638" y="672.92" width="38" height="2.08" fill="#8a8a8a"/>
<rect x="1638" y="596" width="38" height="79" fill="url(#kedge)"/>
</g>
<text x="1627.7" y="691.0" font-size="21.37" fill="#fff" stroke="#fff" stroke-width="0.24" textLength="56.1" lengthAdjust="spacingAndGlyphs">CH 01</text>
<text x="1789.7" y="103.8" font-size="22.38" fill="#fff" stroke="#fff" stroke-width="0.25" textLength="35.3" lengthAdjust="spacingAndGlyphs">Aux</text>
<path d="M1766.02 233.88 A57.95 57.95 0 1 1 1847.98 233.88" fill="none" stroke="#1b4e58" stroke-width="11.5"/>
<line x1="1807" y1="192.9" x2="1769.74" y2="230.16" stroke="#3de0f2" stroke-width="5"/>
<line x1="1769.74" y1="230.16" x2="1763.16" y2="236.74" stroke="#3de0f2" stroke-width="2.75"/>
<rect x="1793.90" y="282.60" width="5.00" height="2.00" fill="#fff" style="shape-rendering:auto"/>
<ellipse cx="1806.10" cy="284.20" rx="4.10" ry="5.40" fill="none" stroke="#fff" stroke-width="2.20"/>
<ellipse cx="1815.80" cy="284.20" rx="4.10" ry="5.40" fill="none" stroke="#fff" stroke-width="2.20"/>
<rect x="1726" y="312" width="162" height="150" fill="#545462" />
<text x="1780.8" y="394.3" font-size="23.11" fill="#e8e8e8" stroke="#e8e8e8" stroke-width="0.25" textLength="51.1" lengthAdjust="spacingAndGlyphs">Mute</text>
<rect x="1726" y="467" width="162" height="228" fill="#545462" />
<text x="1789.3" y="588.6" font-size="22.67" fill="#e8e8e8" stroke="#e8e8e8" stroke-width="0.25" textLength="36.0" lengthAdjust="spacingAndGlyphs">Tap</text>
<rect x="1914" y="79" width="119" height="79" fill="#545462" />
<text x="1953.0" y="126.1" font-size="22.53" fill="#e8e8e8" stroke="#e8e8e8" stroke-width="0.25" textLength="40.7" lengthAdjust="spacingAndGlyphs">Fine</text>
<rect x="1914" y="163" width="119" height="79" fill="#4b4d5c" />
<rect x="1916" y="165" width="115" height="75" fill="#581818" />
<text x="1927.0" y="206.2" font-size="19.19" fill="#f0f0f0" stroke="#f0f0f0" stroke-width="0.21" textLength="91.8" lengthAdjust="spacingAndGlyphs">Mute Enable</text>
<rect x="1914" y="246" width="119" height="79" fill="#545462" />
<rect x="1916" y="248" width="20" height="75" fill="#dcdcdc" />
<text x="1953.0" y="293.3" font-size="23.69" fill="#e8e8e8" stroke="#e8e8e8" stroke-width="0.26" textLength="63.1" lengthAdjust="spacingAndGlyphs">Bus 01</text>
<rect x="1914" y="330" width="119" height="79" fill="#545462" />
<rect x="1916" y="332" width="20" height="75" fill="#dcdcdc" />
<text x="1953.0" y="377.3" font-size="23.69" fill="#e8e8e8" stroke="#e8e8e8" stroke-width="0.26" textLength="63.1" lengthAdjust="spacingAndGlyphs">Bus 02</text>
<rect x="1914" y="414" width="119" height="79" fill="#545462" />
<rect x="1916" y="416" width="20" height="75" fill="#dcdcdc" />
<text x="1953.0" y="461.3" font-size="23.69" fill="#e8e8e8" stroke="#e8e8e8" stroke-width="0.26" textLength="63.1" lengthAdjust="spacingAndGlyphs">Bus 03</text>
<rect x="1914" y="498" width="119" height="79" fill="#545462" />
<rect x="1916" y="500" width="20" height="75" fill="#dcdcdc" />
<text x="1953.0" y="545.3" font-size="23.69" fill="#e8e8e8" stroke="#e8e8e8" stroke-width="0.26" textLength="63.1" lengthAdjust="spacingAndGlyphs">Bus 04</text>
<rect x="1914" y="582" width="119" height="79" fill="#545462" />
<rect x="1916" y="584" width="20" height="75" fill="#dcdcdc" />
<text x="1953.0" y="629.3" font-size="23.69" fill="#e8e8e8" stroke="#e8e8e8" stroke-width="0.26" textLength="63.1" lengthAdjust="spacingAndGlyphs">Bus 05</text>
<rect x="1914" y="666" width="119" height="22" fill="#545462" />
<rect x="1916" y="668" width="20" height="20" fill="#dcdcdc" />
<rect x="2029.6" y="246" width="4" height="98" fill="#00ff00" />
<rect x="2081" y="78.5" width="119" height="80.0" fill="#00ff00" />
<rect x="2083" y="80.5" width="115" height="76.0" fill="#2a2a2a" />
<text x="2103.2" y="126.6" font-size="23.55" fill="#fff" stroke="#fff" stroke-width="0.26" textLength="74.3" lengthAdjust="spacingAndGlyphs">Ch 1-10</text>
<circle cx="2173" cy="84.5" r="3.2" fill="#fff"/>
<circle cx="2183.5" cy="84.5" r="3.2" fill="#fff"/>
<circle cx="2194" cy="84.5" r="3.2" fill="#fff"/>
<rect x="2081" y="162.5" width="119" height="79" fill="#545462" />
<text x="2097.4" y="208.8" font-size="23.69" fill="#e8e8e8" stroke="#e8e8e8" stroke-width="0.26" textLength="85.9" lengthAdjust="spacingAndGlyphs">Ch 11-20</text>
<circle cx="2173" cy="168.5" r="3.2" fill="#fff"/>
<circle cx="2183.5" cy="168.5" r="3.2" fill="#fff"/>
<circle cx="2194" cy="168.5" r="3.2" fill="#fff"/>
<rect x="2081" y="246.5" width="119" height="79" fill="#545462" />
<text x="2097.4" y="292.8" font-size="23.69" fill="#e8e8e8" stroke="#e8e8e8" stroke-width="0.26" textLength="85.9" lengthAdjust="spacingAndGlyphs">Ch 21-30</text>
<circle cx="2173" cy="252.5" r="3.2" fill="#fff"/>
<circle cx="2183.5" cy="252.5" r="3.2" fill="#fff"/>
<circle cx="2194" cy="252.5" r="3.2" fill="#fff"/>
<rect x="2081" y="330.5" width="119" height="79" fill="#545462" />
<text x="2087.7" y="374.1" font-size="19.77" fill="#e8e8e8" stroke="#e8e8e8" stroke-width="0.22" textLength="103.3" lengthAdjust="spacingAndGlyphs">Ch 31-32/Aux</text>
<circle cx="2173" cy="336.5" r="3.2" fill="#fff"/>
<circle cx="2183.5" cy="336.5" r="3.2" fill="#fff"/>
<circle cx="2194" cy="336.5" r="3.2" fill="#fff"/>
<rect x="2081" y="414.5" width="119" height="79" fill="#545462" />
<text x="2084.6" y="458.4" font-size="19.62" fill="#e8e8e8" stroke="#e8e8e8" stroke-width="0.22" textLength="110.7" lengthAdjust="spacingAndGlyphs">FX Ret/Mix 1-2</text>
<circle cx="2173" cy="420.5" r="3.2" fill="#fff"/>
<circle cx="2183.5" cy="420.5" r="3.2" fill="#fff"/>
<circle cx="2194" cy="420.5" r="3.2" fill="#fff"/>
<rect x="2081" y="498.5" width="119" height="79" fill="#545462" />
<text x="2088.9" y="544.7" font-size="22.97" fill="#e8e8e8" stroke="#e8e8e8" stroke-width="0.25" textLength="100.2" lengthAdjust="spacingAndGlyphs">Main/DCA</text>
<circle cx="2173" cy="504.5" r="3.2" fill="#fff"/>
<circle cx="2183.5" cy="504.5" r="3.2" fill="#fff"/>
<circle cx="2194" cy="504.5" r="3.2" fill="#fff"/>
<rect x="2081" y="582.5" width="119" height="79" fill="#545462" />
<text x="2097.4" y="628.7" font-size="23.55" fill="#e8e8e8" stroke="#e8e8e8" stroke-width="0.26" textLength="85.1" lengthAdjust="spacingAndGlyphs">Mix 3-12</text>
<circle cx="2173" cy="588.5" r="3.2" fill="#fff"/>
<circle cx="2183.5" cy="588.5" r="3.2" fill="#fff"/>
<circle cx="2194" cy="588.5" r="3.2" fill="#fff"/>
<rect x="2081" y="666" width="119" height="28" fill="#545462" />
<circle cx="2173" cy="672" r="3.2" fill="#fff"/>
<circle cx="2183.5" cy="672" r="3.2" fill="#fff"/>
<circle cx="2194" cy="672" r="3.2" fill="#fff"/>
<rect x="2217.5" y="77.5" width="3.5" height="351" fill="#00ff00" />
<rect x="0" y="697" width="277" height="74" fill="#dcdcdc" />
<text x="110.3" y="742.4" font-size="23.11" fill="#000" stroke="#000" stroke-width="0.25" textLength="57.2" lengthAdjust="spacingAndGlyphs">CH 01</text>
<rect x="0" y="771" width="277" height="33" fill="#655957" />
<rect x="2.5" y="773.5" width="272.0" height="28.0" fill="#282a30" />
<rect x="138.5" y="773" width="1.5" height="29" fill="#e8e8e8" />
<rect x="0" y="804" width="277" height="56" fill="#4b4d5c" />
<rect x="2" y="806" width="273" height="52" fill="#581818" />
<text x="108.8" y="840.3" font-size="23.40" fill="#f0f0f0" stroke="#f0f0f0" stroke-width="0.26" textLength="58.7" lengthAdjust="spacingAndGlyphs">MUTE</text>
<rect x="0" y="860" width="277" height="768" fill="#282a30" />
<rect x="111.60" y="871.60" width="5.00" height="2.00" fill="#fff" style="shape-rendering:auto"/>
<ellipse cx="123.80" cy="873.20" rx="4.10" ry="5.40" fill="none" stroke="#fff" stroke-width="2.20"/>
<ellipse cx="133.50" cy="873.20" rx="4.10" ry="5.40" fill="none" stroke="#fff" stroke-width="2.20"/>
<rect x="251" y="860" width="7" height="17" fill="#6b1818" />
<rect x="251" y="877" width="7" height="212" fill="#6f4016" />
<rect x="251" y="1089" width="7" height="523" fill="#283a1a" />
<rect x="268" y="860" width="9" height="163" fill="#f81f16" />
<rect x="268" y="1097" width="9" height="162" fill="#f81f16" />
<rect x="121" y="1007" width="23" height="362" fill="#000" />
<rect x="59" y="1006" width="148" height="1" fill="#a8a8a8" />
<text x="4.9" y="1009.4" font-size="15.99" fill="#8e8e8e" stroke="#8e8e8e" stroke-width="0.18" textLength="15.5" lengthAdjust="spacingAndGlyphs">10</text>
<rect x="59" y="1065" width="148" height="1" fill="#a8a8a8" />
<text x="8.7" y="1068.4" font-size="15.99" fill="#8e8e8e" stroke="#8e8e8e" stroke-width="0.18" textLength="7.7" lengthAdjust="spacingAndGlyphs">5</text>
<rect x="59" y="1125" width="148" height="2" fill="#e8e8e8" />
<text x="8.7" y="1128.5" font-size="15.99" fill="#8e8e8e" stroke="#8e8e8e" stroke-width="0.18" textLength="7.7" lengthAdjust="spacingAndGlyphs">0</text>
<rect x="59" y="1185" width="148" height="1" fill="#a8a8a8" />
<text x="6.4" y="1188.0" font-size="15.99" fill="#8e8e8e" stroke="#8e8e8e" stroke-width="0.18" textLength="12.4" lengthAdjust="spacingAndGlyphs">-5</text>
<rect x="59" y="1244" width="148" height="1" fill="#a8a8a8" />
<text x="2.5" y="1247.5" font-size="15.99" fill="#8e8e8e" stroke="#8e8e8e" stroke-width="0.18" textLength="20.1" lengthAdjust="spacingAndGlyphs">-10</text>
<rect x="59" y="1304" width="148" height="1" fill="#a8a8a8" />
<text x="2.5" y="1307.0" font-size="15.99" fill="#8e8e8e" stroke="#8e8e8e" stroke-width="0.18" textLength="20.1" lengthAdjust="spacingAndGlyphs">-20</text>
<rect x="59" y="1363" width="148" height="1" fill="#a8a8a8" />
<text x="2.5" y="1366.5" font-size="15.99" fill="#8e8e8e" stroke="#8e8e8e" stroke-width="0.18" textLength="20.1" lengthAdjust="spacingAndGlyphs">-30</text>
<rect x="59" y="1423" width="148" height="1" fill="#a8a8a8" />
<text x="2.5" y="1426.0" font-size="15.99" fill="#8e8e8e" stroke="#8e8e8e" stroke-width="0.18" textLength="20.1" lengthAdjust="spacingAndGlyphs">-50</text>
<rect x="185.0" y="1392.2" width="17.3" height="181.6" rx="8.6" fill="url(#shd)" style="shape-rendering:auto"/>
<clipPath id="kc2"><rect x="77" y="1369.5" width="108" height="227" rx="5.0" style="shape-rendering:auto"/></clipPath>
<g clip-path="url(#kc2)">
<rect x="77" y="1369.5" width="108" height="227" fill="#b1b1b1"/>
<rect x="77" y="1369.50" width="108" height="2.99" fill="#7e7e7e"/>
<rect x="77" y="1372.49" width="108" height="4.98" fill="#a4a4a4"/>
<rect x="77" y="1377.46" width="108" height="26.38" fill="#cbcbcb"/>
<rect x="77" y="1403.85" width="108" height="4.48" fill="#bababa"/>
<rect x="77" y="1408.33" width="108" height="7.96" fill="#8b8b8b"/>
<rect x="77" y="1416.29" width="108" height="2.99" fill="#b0b0b0"/>
<rect x="77" y="1419.28" width="108" height="17.92" fill="#888888"/>
<rect x="77" y="1437.20" width="108" height="2.99" fill="#b3b3b3"/>
<rect x="77" y="1440.19" width="108" height="14.44" fill="#9c9c9c"/>
<rect x="77" y="1454.62" width="108" height="1.49" fill="#b5b5b5"/>
<rect x="77" y="1456.12" width="108" height="17.42" fill="#cacaca"/>
<rect x="77" y="1473.54" width="108" height="8.96" fill="#ffffff"/>
<rect x="77" y="1482.50" width="108" height="1.00" fill="#b5b5b5"/>
<rect x="77" y="1483.50" width="108" height="17.92" fill="#cbcbcb"/>
<rect x="77" y="1501.42" width="108" height="2.99" fill="#a8a8a8"/>
<rect x="77" y="1504.41" width="108" height="15.93" fill="#c9c9c9"/>
<rect x="77" y="1520.34" width="108" height="2.99" fill="#a8a8a8"/>
<rect x="77" y="1523.32" width="108" height="17.42" fill="#e3e3e3"/>
<rect x="77" y="1540.75" width="108" height="2.99" fill="#b0b0b0"/>
<rect x="77" y="1543.73" width="108" height="8.96" fill="#e0e0e0"/>
<rect x="77" y="1552.69" width="108" height="2.99" fill="#bdbdbd"/>
<rect x="77" y="1555.68" width="108" height="28.87" fill="#b1b1b1"/>
<rect x="77" y="1584.55" width="108" height="5.97" fill="#a0a0a0"/>
<rect x="77" y="1590.53" width="108" height="5.97" fill="#8a8a8a"/>
<rect x="77" y="1369.5" width="108" height="227" fill="url(#kedge)"/>
</g>
<text x="96.8" y="1623.8" font-size="22.09" fill="#fff" stroke="#fff" stroke-width="0.24" textLength="57.8" lengthAdjust="spacingAndGlyphs">CH 01</text>
<rect x="278" y="697" width="277" height="74" fill="#dcdcdc" />
<text x="388.3" y="742.4" font-size="23.11" fill="#000" stroke="#000" stroke-width="0.25" textLength="57.2" lengthAdjust="spacingAndGlyphs">CH 02</text>
<rect x="278" y="771" width="277" height="33" fill="#655957" />
<rect x="280.5" y="773.5" width="272.0" height="28.0" fill="#282a30" />
<rect x="416.5" y="773" width="1.5" height="29" fill="#e8e8e8" />
<rect x="278" y="804" width="277" height="56" fill="#4b4d5c" />
<rect x="280" y="806" width="273" height="52" fill="#581818" />
<text x="386.8" y="840.3" font-size="23.40" fill="#f0f0f0" stroke="#f0f0f0" stroke-width="0.26" textLength="58.7" lengthAdjust="spacingAndGlyphs">MUTE</text>
<rect x="278" y="860" width="277" height="768" fill="#282a30" />
<rect x="389.60" y="871.60" width="5.00" height="2.00" fill="#fff" style="shape-rendering:auto"/>
<ellipse cx="401.80" cy="873.20" rx="4.10" ry="5.40" fill="none" stroke="#fff" stroke-width="2.20"/>
<ellipse cx="411.50" cy="873.20" rx="4.10" ry="5.40" fill="none" stroke="#fff" stroke-width="2.20"/>
<rect x="529" y="860" width="7" height="17" fill="#6b1818" />
<rect x="529" y="877" width="7" height="212" fill="#6f4016" />
<rect x="529" y="1089" width="7" height="523" fill="#283a1a" />
<rect x="546" y="860" width="9" height="163" fill="#f81f16" />
<rect x="546" y="1097" width="9" height="162" fill="#f81f16" />
<rect x="399" y="1007" width="23" height="362" fill="#000" />
<rect x="337" y="1006" width="148" height="1" fill="#a8a8a8" />
<text x="282.9" y="1009.4" font-size="15.99" fill="#8e8e8e" stroke="#8e8e8e" stroke-width="0.18" textLength="15.5" lengthAdjust="spacingAndGlyphs">10</text>
<rect x="337" y="1065" width="148" height="1" fill="#a8a8a8" />
<text x="286.7" y="1068.4" font-size="15.99" fill="#8e8e8e" stroke="#8e8e8e" stroke-width="0.18" textLength="7.7" lengthAdjust="spacingAndGlyphs">5</text>
<rect x="337" y="1125" width="148" height="2" fill="#e8e8e8" />
<text x="286.7" y="1128.5" font-size="15.99" fill="#8e8e8e" stroke="#8e8e8e" stroke-width="0.18" textLength="7.7" lengthAdjust="spacingAndGlyphs">0</text>
<rect x="337" y="1185" width="148" height="1" fill="#a8a8a8" />
<text x="284.4" y="1188.0" font-size="15.99" fill="#8e8e8e" stroke="#8e8e8e" stroke-width="0.18" textLength="12.4" lengthAdjust="spacingAndGlyphs">-5</text>
<rect x="337" y="1244" width="148" height="1" fill="#a8a8a8" />
<text x="280.5" y="1247.5" font-size="15.99" fill="#8e8e8e" stroke="#8e8e8e" stroke-width="0.18" textLength="20.1" lengthAdjust="spacingAndGlyphs">-10</text>
<rect x="337" y="1304" width="148" height="1" fill="#a8a8a8" />
<text x="280.5" y="1307.0" font-size="15.99" fill="#8e8e8e" stroke="#8e8e8e" stroke-width="0.18" textLength="20.1" lengthAdjust="spacingAndGlyphs">-20</text>
<rect x="337" y="1363" width="148" height="1" fill="#a8a8a8" />
<text x="280.5" y="1366.5" font-size="15.99" fill="#8e8e8e" stroke="#8e8e8e" stroke-width="0.18" textLength="20.1" lengthAdjust="spacingAndGlyphs">-30</text>
<rect x="337" y="1423" width="148" height="1" fill="#a8a8a8" />
<text x="280.5" y="1426.0" font-size="15.99" fill="#8e8e8e" stroke="#8e8e8e" stroke-width="0.18" textLength="20.1" lengthAdjust="spacingAndGlyphs">-50</text>
<rect x="463.0" y="1392.2" width="17.3" height="181.6" rx="8.6" fill="url(#shd)" style="shape-rendering:auto"/>
<clipPath id="kc3"><rect x="355" y="1369.5" width="108" height="227" rx="5.0" style="shape-rendering:auto"/></clipPath>
<g clip-path="url(#kc3)">
<rect x="355" y="1369.5" width="108" height="227" fill="#b1b1b1"/>
<rect x="355" y="1369.50" width="108" height="2.99" fill="#7e7e7e"/>
<rect x="355" y="1372.49" width="108" height="4.98" fill="#a4a4a4"/>
<rect x="355" y="1377.46" width="108" height="26.38" fill="#cbcbcb"/>
<rect x="355" y="1403.85" width="108" height="4.48" fill="#bababa"/>
<rect x="355" y="1408.33" width="108" height="7.96" fill="#8b8b8b"/>
<rect x="355" y="1416.29" width="108" height="2.99" fill="#b0b0b0"/>
<rect x="355" y="1419.28" width="108" height="17.92" fill="#888888"/>
<rect x="355" y="1437.20" width="108" height="2.99" fill="#b3b3b3"/>
<rect x="355" y="1440.19" width="108" height="14.44" fill="#9c9c9c"/>
<rect x="355" y="1454.62" width="108" height="1.49" fill="#b5b5b5"/>
<rect x="355" y="1456.12" width="108" height="17.42" fill="#cacaca"/>
<rect x="355" y="1473.54" width="108" height="8.96" fill="#ffffff"/>
<rect x="355" y="1482.50" width="108" height="1.00" fill="#b5b5b5"/>
<rect x="355" y="1483.50" width="108" height="17.92" fill="#cbcbcb"/>
<rect x="355" y="1501.42" width="108" height="2.99" fill="#a8a8a8"/>
<rect x="355" y="1504.41" width="108" height="15.93" fill="#c9c9c9"/>
<rect x="355" y="1520.34" width="108" height="2.99" fill="#a8a8a8"/>
<rect x="355" y="1523.32" width="108" height="17.42" fill="#e3e3e3"/>
<rect x="355" y="1540.75" width="108" height="2.99" fill="#b0b0b0"/>
<rect x="355" y="1543.73" width="108" height="8.96" fill="#e0e0e0"/>
<rect x="355" y="1552.69" width="108" height="2.99" fill="#bdbdbd"/>
<rect x="355" y="1555.68" width="108" height="28.87" fill="#b1b1b1"/>
<rect x="355" y="1584.55" width="108" height="5.97" fill="#a0a0a0"/>
<rect x="355" y="1590.53" width="108" height="5.97" fill="#8a8a8a"/>
<rect x="355" y="1369.5" width="108" height="227" fill="url(#kedge)"/>
</g>
<text x="374.8" y="1623.8" font-size="22.09" fill="#fff" stroke="#fff" stroke-width="0.24" textLength="57.8" lengthAdjust="spacingAndGlyphs">CH 02</text>
<rect x="277" y="697" width="1" height="74" fill="#10131a" />
<rect x="277" y="771" width="1" height="857" fill="#151a21" />
<rect x="556" y="697" width="277" height="74" fill="#dcdcdc" />
<text x="666.3" y="742.4" font-size="23.11" fill="#000" stroke="#000" stroke-width="0.25" textLength="57.2" lengthAdjust="spacingAndGlyphs">CH 03</text>
<rect x="556" y="771" width="277" height="33" fill="#655957" />
<rect x="558.5" y="773.5" width="272.0" height="28.0" fill="#282a30" />
<rect x="694.5" y="773" width="1.5" height="29" fill="#e8e8e8" />
<rect x="556" y="804" width="277" height="56" fill="#4b4d5c" />
<rect x="558" y="806" width="273" height="52" fill="#581818" />
<text x="664.8" y="840.3" font-size="23.40" fill="#f0f0f0" stroke="#f0f0f0" stroke-width="0.26" textLength="58.7" lengthAdjust="spacingAndGlyphs">MUTE</text>
<rect x="556" y="860" width="277" height="768" fill="#282a30" />
<rect x="667.60" y="871.60" width="5.00" height="2.00" fill="#fff" style="shape-rendering:auto"/>
<ellipse cx="679.80" cy="873.20" rx="4.10" ry="5.40" fill="none" stroke="#fff" stroke-width="2.20"/>
<ellipse cx="689.50" cy="873.20" rx="4.10" ry="5.40" fill="none" stroke="#fff" stroke-width="2.20"/>
<rect x="807" y="860" width="7" height="17" fill="#6b1818" />
<rect x="807" y="877" width="7" height="212" fill="#6f4016" />
<rect x="807" y="1089" width="7" height="523" fill="#283a1a" />
<rect x="824" y="860" width="9" height="163" fill="#f81f16" />
<rect x="824" y="1097" width="9" height="162" fill="#f81f16" />
<rect x="677" y="1007" width="23" height="362" fill="#000" />
<rect x="615" y="1006" width="148" height="1" fill="#a8a8a8" />
<text x="560.9" y="1009.4" font-size="15.99" fill="#8e8e8e" stroke="#8e8e8e" stroke-width="0.18" textLength="15.5" lengthAdjust="spacingAndGlyphs">10</text>
<rect x="615" y="1065" width="148" height="1" fill="#a8a8a8" />
<text x="564.7" y="1068.4" font-size="15.99" fill="#8e8e8e" stroke="#8e8e8e" stroke-width="0.18" textLength="7.7" lengthAdjust="spacingAndGlyphs">5</text>
<rect x="615" y="1125" width="148" height="2" fill="#e8e8e8" />
<text x="564.7" y="1128.5" font-size="15.99" fill="#8e8e8e" stroke="#8e8e8e" stroke-width="0.18" textLength="7.7" lengthAdjust="spacingAndGlyphs">0</text>
<rect x="615" y="1185" width="148" height="1" fill="#a8a8a8" />
<text x="562.4" y="1188.0" font-size="15.99" fill="#8e8e8e" stroke="#8e8e8e" stroke-width="0.18" textLength="12.4" lengthAdjust="spacingAndGlyphs">-5</text>
<rect x="615" y="1244" width="148" height="1" fill="#a8a8a8" />
<text x="558.5" y="1247.5" font-size="15.99" fill="#8e8e8e" stroke="#8e8e8e" stroke-width="0.18" textLength="20.1" lengthAdjust="spacingAndGlyphs">-10</text>
<rect x="615" y="1304" width="148" height="1" fill="#a8a8a8" />
<text x="558.5" y="1307.0" font-size="15.99" fill="#8e8e8e" stroke="#8e8e8e" stroke-width="0.18" textLength="20.1" lengthAdjust="spacingAndGlyphs">-20</text>
<rect x="615" y="1363" width="148" height="1" fill="#a8a8a8" />
<text x="558.5" y="1366.5" font-size="15.99" fill="#8e8e8e" stroke="#8e8e8e" stroke-width="0.18" textLength="20.1" lengthAdjust="spacingAndGlyphs">-30</text>
<rect x="615" y="1423" width="148" height="1" fill="#a8a8a8" />
<text x="558.5" y="1426.0" font-size="15.99" fill="#8e8e8e" stroke="#8e8e8e" stroke-width="0.18" textLength="20.1" lengthAdjust="spacingAndGlyphs">-50</text>
<rect x="741.0" y="1392.2" width="17.3" height="181.6" rx="8.6" fill="url(#shd)" style="shape-rendering:auto"/>
<clipPath id="kc4"><rect x="633" y="1369.5" width="108" height="227" rx="5.0" style="shape-rendering:auto"/></clipPath>
<g clip-path="url(#kc4)">
<rect x="633" y="1369.5" width="108" height="227" fill="#b1b1b1"/>
<rect x="633" y="1369.50" width="108" height="2.99" fill="#7e7e7e"/>
<rect x="633" y="1372.49" width="108" height="4.98" fill="#a4a4a4"/>
<rect x="633" y="1377.46" width="108" height="26.38" fill="#cbcbcb"/>
<rect x="633" y="1403.85" width="108" height="4.48" fill="#bababa"/>
<rect x="633" y="1408.33" width="108" height="7.96" fill="#8b8b8b"/>
<rect x="633" y="1416.29" width="108" height="2.99" fill="#b0b0b0"/>
<rect x="633" y="1419.28" width="108" height="17.92" fill="#888888"/>
<rect x="633" y="1437.20" width="108" height="2.99" fill="#b3b3b3"/>
<rect x="633" y="1440.19" width="108" height="14.44" fill="#9c9c9c"/>
<rect x="633" y="1454.62" width="108" height="1.49" fill="#b5b5b5"/>
<rect x="633" y="1456.12" width="108" height="17.42" fill="#cacaca"/>
<rect x="633" y="1473.54" width="108" height="8.96" fill="#ffffff"/>
<rect x="633" y="1482.50" width="108" height="1.00" fill="#b5b5b5"/>
<rect x="633" y="1483.50" width="108" height="17.92" fill="#cbcbcb"/>
<rect x="633" y="1501.42" width="108" height="2.99" fill="#a8a8a8"/>
<rect x="633" y="1504.41" width="108" height="15.93" fill="#c9c9c9"/>
<rect x="633" y="1520.34" width="108" height="2.99" fill="#a8a8a8"/>
<rect x="633" y="1523.32" width="108" height="17.42" fill="#e3e3e3"/>
<rect x="633" y="1540.75" width="108" height="2.99" fill="#b0b0b0"/>
<rect x="633" y="1543.73" width="108" height="8.96" fill="#e0e0e0"/>
<rect x="633" y="1552.69" width="108" height="2.99" fill="#bdbdbd"/>
<rect x="633" y="1555.68" width="108" height="28.87" fill="#b1b1b1"/>
<rect x="633" y="1584.55" width="108" height="5.97" fill="#a0a0a0"/>
<rect x="633" y="1590.53" width="108" height="5.97" fill="#8a8a8a"/>
<rect x="633" y="1369.5" width="108" height="227" fill="url(#kedge)"/>
</g>
<text x="652.8" y="1623.8" font-size="22.09" fill="#fff" stroke="#fff" stroke-width="0.24" textLength="57.8" lengthAdjust="spacingAndGlyphs">CH 03</text>
<rect x="555" y="697" width="1" height="74" fill="#10131a" />
<rect x="555" y="771" width="1" height="857" fill="#151a21" />
<rect x="835" y="697" width="276" height="74" fill="#dcdcdc" />
<text x="945.3" y="742.4" font-size="23.11" fill="#000" stroke="#000" stroke-width="0.25" textLength="57.2" lengthAdjust="spacingAndGlyphs">CH 04</text>
<rect x="835" y="771" width="276" height="33" fill="#655957" />
<rect x="837.5" y="773.5" width="271.0" height="28.0" fill="#282a30" />
<rect x="973.5" y="773" width="1.5" height="29" fill="#e8e8e8" />
<rect x="835" y="804" width="276" height="56" fill="#4b4d5c" />
<rect x="837" y="806" width="272" height="52" fill="#581818" />
<text x="943.8" y="840.3" font-size="23.40" fill="#f0f0f0" stroke="#f0f0f0" stroke-width="0.26" textLength="58.7" lengthAdjust="spacingAndGlyphs">MUTE</text>
<rect x="835" y="860" width="276" height="768" fill="#282a30" />
<rect x="946.60" y="871.60" width="5.00" height="2.00" fill="#fff" style="shape-rendering:auto"/>
<ellipse cx="958.80" cy="873.20" rx="4.10" ry="5.40" fill="none" stroke="#fff" stroke-width="2.20"/>
<ellipse cx="968.50" cy="873.20" rx="4.10" ry="5.40" fill="none" stroke="#fff" stroke-width="2.20"/>
<rect x="1086" y="860" width="7" height="17" fill="#6b1818" />
<rect x="1086" y="877" width="7" height="212" fill="#6f4016" />
<rect x="1086" y="1089" width="7" height="523" fill="#283a1a" />
<rect x="1102" y="860" width="9" height="163" fill="#f81f16" />
<rect x="1102" y="1097" width="9" height="162" fill="#f81f16" />
<rect x="956" y="1007" width="23" height="362" fill="#000" />
<rect x="894" y="1006" width="148" height="1" fill="#a8a8a8" />
<text x="839.9" y="1009.4" font-size="15.99" fill="#8e8e8e" stroke="#8e8e8e" stroke-width="0.18" textLength="15.5" lengthAdjust="spacingAndGlyphs">10</text>
<rect x="894" y="1065" width="148" height="1" fill="#a8a8a8" />
<text x="843.7" y="1068.4" font-size="15.99" fill="#8e8e8e" stroke="#8e8e8e" stroke-width="0.18" textLength="7.7" lengthAdjust="spacingAndGlyphs">5</text>
<rect x="894" y="1125" width="148" height="2" fill="#e8e8e8" />
<text x="843.7" y="1128.5" font-size="15.99" fill="#8e8e8e" stroke="#8e8e8e" stroke-width="0.18" textLength="7.7" lengthAdjust="spacingAndGlyphs">0</text>
<rect x="894" y="1185" width="148" height="1" fill="#a8a8a8" />
<text x="841.4" y="1188.0" font-size="15.99" fill="#8e8e8e" stroke="#8e8e8e" stroke-width="0.18" textLength="12.4" lengthAdjust="spacingAndGlyphs">-5</text>
<rect x="894" y="1244" width="148" height="1" fill="#a8a8a8" />
<text x="837.5" y="1247.5" font-size="15.99" fill="#8e8e8e" stroke="#8e8e8e" stroke-width="0.18" textLength="20.1" lengthAdjust="spacingAndGlyphs">-10</text>
<rect x="894" y="1304" width="148" height="1" fill="#a8a8a8" />
<text x="837.5" y="1307.0" font-size="15.99" fill="#8e8e8e" stroke="#8e8e8e" stroke-width="0.18" textLength="20.1" lengthAdjust="spacingAndGlyphs">-20</text>
<rect x="894" y="1363" width="148" height="1" fill="#a8a8a8" />
<text x="837.5" y="1366.5" font-size="15.99" fill="#8e8e8e" stroke="#8e8e8e" stroke-width="0.18" textLength="20.1" lengthAdjust="spacingAndGlyphs">-30</text>
<rect x="894" y="1423" width="148" height="1" fill="#a8a8a8" />
<text x="837.5" y="1426.0" font-size="15.99" fill="#8e8e8e" stroke="#8e8e8e" stroke-width="0.18" textLength="20.1" lengthAdjust="spacingAndGlyphs">-50</text>
<rect x="1020.0" y="1392.2" width="17.3" height="181.6" rx="8.6" fill="url(#shd)" style="shape-rendering:auto"/>
<clipPath id="kc5"><rect x="912" y="1369.5" width="108" height="227" rx="5.0" style="shape-rendering:auto"/></clipPath>
<g clip-path="url(#kc5)">
<rect x="912" y="1369.5" width="108" height="227" fill="#b1b1b1"/>
<rect x="912" y="1369.50" width="108" height="2.99" fill="#7e7e7e"/>
<rect x="912" y="1372.49" width="108" height="4.98" fill="#a4a4a4"/>
<rect x="912" y="1377.46" width="108" height="26.38" fill="#cbcbcb"/>
<rect x="912" y="1403.85" width="108" height="4.48" fill="#bababa"/>
<rect x="912" y="1408.33" width="108" height="7.96" fill="#8b8b8b"/>
<rect x="912" y="1416.29" width="108" height="2.99" fill="#b0b0b0"/>
<rect x="912" y="1419.28" width="108" height="17.92" fill="#888888"/>
<rect x="912" y="1437.20" width="108" height="2.99" fill="#b3b3b3"/>
<rect x="912" y="1440.19" width="108" height="14.44" fill="#9c9c9c"/>
<rect x="912" y="1454.62" width="108" height="1.49" fill="#b5b5b5"/>
<rect x="912" y="1456.12" width="108" height="17.42" fill="#cacaca"/>
<rect x="912" y="1473.54" width="108" height="8.96" fill="#ffffff"/>
<rect x="912" y="1482.50" width="108" height="1.00" fill="#b5b5b5"/>
<rect x="912" y="1483.50" width="108" height="17.92" fill="#cbcbcb"/>
<rect x="912" y="1501.42" width="108" height="2.99" fill="#a8a8a8"/>
<rect x="912" y="1504.41" width="108" height="15.93" fill="#c9c9c9"/>
<rect x="912" y="1520.34" width="108" height="2.99" fill="#a8a8a8"/>
<rect x="912" y="1523.32" width="108" height="17.42" fill="#e3e3e3"/>
<rect x="912" y="1540.75" width="108" height="2.99" fill="#b0b0b0"/>
<rect x="912" y="1543.73" width="108" height="8.96" fill="#e0e0e0"/>
<rect x="912" y="1552.69" width="108" height="2.99" fill="#bdbdbd"/>
<rect x="912" y="1555.68" width="108" height="28.87" fill="#b1b1b1"/>
<rect x="912" y="1584.55" width="108" height="5.97" fill="#a0a0a0"/>
<rect x="912" y="1590.53" width="108" height="5.97" fill="#8a8a8a"/>
<rect x="912" y="1369.5" width="108" height="227" fill="url(#kedge)"/>
</g>
<text x="931.8" y="1623.8" font-size="22.09" fill="#fff" stroke="#fff" stroke-width="0.24" textLength="57.8" lengthAdjust="spacingAndGlyphs">CH 04</text>
<rect x="833" y="697" width="2" height="74" fill="#10131a" />
<rect x="833" y="771" width="2" height="857" fill="#151a21" />
<rect x="1113" y="697" width="277" height="74" fill="#dcdcdc" />
<text x="1223.3" y="742.4" font-size="23.11" fill="#000" stroke="#000" stroke-width="0.25" textLength="57.2" lengthAdjust="spacingAndGlyphs">CH 05</text>
<rect x="1113" y="771" width="277" height="33" fill="#655957" />
<rect x="1115.5" y="773.5" width="272.0" height="28.0" fill="#282a30" />
<rect x="1251.5" y="773" width="1.5" height="29" fill="#e8e8e8" />
<rect x="1113" y="804" width="277" height="56" fill="#4b4d5c" />
<rect x="1115" y="806" width="273" height="52" fill="#581818" />
<text x="1221.8" y="840.3" font-size="23.40" fill="#f0f0f0" stroke="#f0f0f0" stroke-width="0.26" textLength="58.7" lengthAdjust="spacingAndGlyphs">MUTE</text>
<rect x="1113" y="860" width="277" height="768" fill="#282a30" />
<rect x="1224.60" y="871.60" width="5.00" height="2.00" fill="#fff" style="shape-rendering:auto"/>
<ellipse cx="1236.80" cy="873.20" rx="4.10" ry="5.40" fill="none" stroke="#fff" stroke-width="2.20"/>
<ellipse cx="1246.50" cy="873.20" rx="4.10" ry="5.40" fill="none" stroke="#fff" stroke-width="2.20"/>
<rect x="1364" y="860" width="7" height="17" fill="#6b1818" />
<rect x="1364" y="877" width="7" height="212" fill="#6f4016" />
<rect x="1364" y="1089" width="7" height="523" fill="#283a1a" />
<rect x="1381" y="860" width="9" height="163" fill="#f81f16" />
<rect x="1381" y="1097" width="9" height="162" fill="#f81f16" />
<rect x="1234" y="1007" width="23" height="362" fill="#000" />
<rect x="1172" y="1006" width="148" height="1" fill="#a8a8a8" />
<text x="1117.9" y="1009.4" font-size="15.99" fill="#8e8e8e" stroke="#8e8e8e" stroke-width="0.18" textLength="15.5" lengthAdjust="spacingAndGlyphs">10</text>
<rect x="1172" y="1065" width="148" height="1" fill="#a8a8a8" />
<text x="1121.7" y="1068.4" font-size="15.99" fill="#8e8e8e" stroke="#8e8e8e" stroke-width="0.18" textLength="7.7" lengthAdjust="spacingAndGlyphs">5</text>
<rect x="1172" y="1125" width="148" height="2" fill="#e8e8e8" />
<text x="1121.7" y="1128.5" font-size="15.99" fill="#8e8e8e" stroke="#8e8e8e" stroke-width="0.18" textLength="7.7" lengthAdjust="spacingAndGlyphs">0</text>
<rect x="1172" y="1185" width="148" height="1" fill="#a8a8a8" />
<text x="1119.4" y="1188.0" font-size="15.99" fill="#8e8e8e" stroke="#8e8e8e" stroke-width="0.18" textLength="12.4" lengthAdjust="spacingAndGlyphs">-5</text>
<rect x="1172" y="1244" width="148" height="1" fill="#a8a8a8" />
<text x="1115.5" y="1247.5" font-size="15.99" fill="#8e8e8e" stroke="#8e8e8e" stroke-width="0.18" textLength="20.1" lengthAdjust="spacingAndGlyphs">-10</text>
<rect x="1172" y="1304" width="148" height="1" fill="#a8a8a8" />
<text x="1115.5" y="1307.0" font-size="15.99" fill="#8e8e8e" stroke="#8e8e8e" stroke-width="0.18" textLength="20.1" lengthAdjust="spacingAndGlyphs">-20</text>
<rect x="1172" y="1363" width="148" height="1" fill="#a8a8a8" />
<text x="1115.5" y="1366.5" font-size="15.99" fill="#8e8e8e" stroke="#8e8e8e" stroke-width="0.18" textLength="20.1" lengthAdjust="spacingAndGlyphs">-30</text>
<rect x="1172" y="1423" width="148" height="1" fill="#a8a8a8" />
<text x="1115.5" y="1426.0" font-size="15.99" fill="#8e8e8e" stroke="#8e8e8e" stroke-width="0.18" textLength="20.1" lengthAdjust="spacingAndGlyphs">-50</text>
<rect x="1298.0" y="1392.2" width="17.3" height="181.6" rx="8.6" fill="url(#shd)" style="shape-rendering:auto"/>
<clipPath id="kc6"><rect x="1190" y="1369.5" width="108" height="227" rx="5.0" style="shape-rendering:auto"/></clipPath>
<g clip-path="url(#kc6)">
<rect x="1190" y="1369.5" width="108" height="227" fill="#b1b1b1"/>
<rect x="1190" y="1369.50" width="108" height="2.99" fill="#7e7e7e"/>
<rect x="1190" y="1372.49" width="108" height="4.98" fill="#a4a4a4"/>
<rect x="1190" y="1377.46" width="108" height="26.38" fill="#cbcbcb"/>
<rect x="1190" y="1403.85" width="108" height="4.48" fill="#bababa"/>
<rect x="1190" y="1408.33" width="108" height="7.96" fill="#8b8b8b"/>
<rect x="1190" y="1416.29" width="108" height="2.99" fill="#b0b0b0"/>
<rect x="1190" y="1419.28" width="108" height="17.92" fill="#888888"/>
<rect x="1190" y="1437.20" width="108" height="2.99" fill="#b3b3b3"/>
<rect x="1190" y="1440.19" width="108" height="14.44" fill="#9c9c9c"/>
<rect x="1190" y="1454.62" width="108" height="1.49" fill="#b5b5b5"/>
<rect x="1190" y="1456.12" width="108" height="17.42" fill="#cacaca"/>
<rect x="1190" y="1473.54" width="108" height="8.96" fill="#ffffff"/>
<rect x="1190" y="1482.50" width="108" height="1.00" fill="#b5b5b5"/>
<rect x="1190" y="1483.50" width="108" height="17.92" fill="#cbcbcb"/>
<rect x="1190" y="1501.42" width="108" height="2.99" fill="#a8a8a8"/>
<rect x="1190" y="1504.41" width="108" height="15.93" fill="#c9c9c9"/>
<rect x="1190" y="1520.34" width="108" height="2.99" fill="#a8a8a8"/>
<rect x="1190" y="1523.32" width="108" height="17.42" fill="#e3e3e3"/>
<rect x="1190" y="1540.75" width="108" height="2.99" fill="#b0b0b0"/>
<rect x="1190" y="1543.73" width="108" height="8.96" fill="#e0e0e0"/>
<rect x="1190" y="1552.69" width="108" height="2.99" fill="#bdbdbd"/>
<rect x="1190" y="1555.68" width="108" height="28.87" fill="#b1b1b1"/>
<rect x="1190" y="1584.55" width="108" height="5.97" fill="#a0a0a0"/>
<rect x="1190" y="1590.53" width="108" height="5.97" fill="#8a8a8a"/>
<rect x="1190" y="1369.5" width="108" height="227" fill="url(#kedge)"/>
</g>
<text x="1209.8" y="1623.8" font-size="22.09" fill="#fff" stroke="#fff" stroke-width="0.24" textLength="57.8" lengthAdjust="spacingAndGlyphs">CH 05</text>
<rect x="1111" y="697" width="2" height="74" fill="#10131a" />
<rect x="1111" y="771" width="2" height="857" fill="#151a21" />
<rect x="1391" y="697" width="277" height="74" fill="#dcdcdc" />
<text x="1501.3" y="742.4" font-size="23.11" fill="#000" stroke="#000" stroke-width="0.25" textLength="57.2" lengthAdjust="spacingAndGlyphs">CH 06</text>
<rect x="1391" y="771" width="277" height="33" fill="#655957" />
<rect x="1393.5" y="773.5" width="272.0" height="28.0" fill="#282a30" />
<rect x="1529.5" y="773" width="1.5" height="29" fill="#e8e8e8" />
<rect x="1391" y="804" width="277" height="56" fill="#4b4d5c" />
<rect x="1393" y="806" width="273" height="52" fill="#581818" />
<text x="1499.8" y="840.3" font-size="23.40" fill="#f0f0f0" stroke="#f0f0f0" stroke-width="0.26" textLength="58.7" lengthAdjust="spacingAndGlyphs">MUTE</text>
<rect x="1391" y="860" width="277" height="768" fill="#282a30" />
<rect x="1502.60" y="871.60" width="5.00" height="2.00" fill="#fff" style="shape-rendering:auto"/>
<ellipse cx="1514.80" cy="873.20" rx="4.10" ry="5.40" fill="none" stroke="#fff" stroke-width="2.20"/>
<ellipse cx="1524.50" cy="873.20" rx="4.10" ry="5.40" fill="none" stroke="#fff" stroke-width="2.20"/>
<rect x="1642" y="860" width="7" height="17" fill="#6b1818" />
<rect x="1642" y="877" width="7" height="212" fill="#6f4016" />
<rect x="1642" y="1089" width="7" height="523" fill="#283a1a" />
<rect x="1659" y="860" width="9" height="163" fill="#f81f16" />
<rect x="1659" y="1097" width="9" height="162" fill="#f81f16" />
<rect x="1512" y="1007" width="23" height="362" fill="#000" />
<rect x="1450" y="1006" width="148" height="1" fill="#a8a8a8" />
<text x="1395.9" y="1009.4" font-size="15.99" fill="#8e8e8e" stroke="#8e8e8e" stroke-width="0.18" textLength="15.5" lengthAdjust="spacingAndGlyphs">10</text>
<rect x="1450" y="1065" width="148" height="1" fill="#a8a8a8" />
<text x="1399.7" y="1068.4" font-size="15.99" fill="#8e8e8e" stroke="#8e8e8e" stroke-width="0.18" textLength="7.7" lengthAdjust="spacingAndGlyphs">5</text>
<rect x="1450" y="1125" width="148" height="2" fill="#e8e8e8" />
<text x="1399.7" y="1128.5" font-size="15.99" fill="#8e8e8e" stroke="#8e8e8e" stroke-width="0.18" textLength="7.7" lengthAdjust="spacingAndGlyphs">0</text>
<rect x="1450" y="1185" width="148" height="1" fill="#a8a8a8" />
<text x="1397.4" y="1188.0" font-size="15.99" fill="#8e8e8e" stroke="#8e8e8e" stroke-width="0.18" textLength="12.4" lengthAdjust="spacingAndGlyphs">-5</text>
<rect x="1450" y="1244" width="148" height="1" fill="#a8a8a8" />
<text x="1393.5" y="1247.5" font-size="15.99" fill="#8e8e8e" stroke="#8e8e8e" stroke-width="0.18" textLength="20.1" lengthAdjust="spacingAndGlyphs">-10</text>
<rect x="1450" y="1304" width="148" height="1" fill="#a8a8a8" />
<text x="1393.5" y="1307.0" font-size="15.99" fill="#8e8e8e" stroke="#8e8e8e" stroke-width="0.18" textLength="20.1" lengthAdjust="spacingAndGlyphs">-20</text>
<rect x="1450" y="1363" width="148" height="1" fill="#a8a8a8" />
<text x="1393.5" y="1366.5" font-size="15.99" fill="#8e8e8e" stroke="#8e8e8e" stroke-width="0.18" textLength="20.1" lengthAdjust="spacingAndGlyphs">-30</text>
<rect x="1450" y="1423" width="148" height="1" fill="#a8a8a8" />
<text x="1393.5" y="1426.0" font-size="15.99" fill="#8e8e8e" stroke="#8e8e8e" stroke-width="0.18" textLength="20.1" lengthAdjust="spacingAndGlyphs">-50</text>
<rect x="1576.0" y="1392.2" width="17.3" height="181.6" rx="8.6" fill="url(#shd)" style="shape-rendering:auto"/>
<clipPath id="kc7"><rect x="1468" y="1369.5" width="108" height="227" rx="5.0" style="shape-rendering:auto"/></clipPath>
<g clip-path="url(#kc7)">
<rect x="1468" y="1369.5" width="108" height="227" fill="#b1b1b1"/>
<rect x="1468" y="1369.50" width="108" height="2.99" fill="#7e7e7e"/>
<rect x="1468" y="1372.49" width="108" height="4.98" fill="#a4a4a4"/>
<rect x="1468" y="1377.46" width="108" height="26.38" fill="#cbcbcb"/>
<rect x="1468" y="1403.85" width="108" height="4.48" fill="#bababa"/>
<rect x="1468" y="1408.33" width="108" height="7.96" fill="#8b8b8b"/>
<rect x="1468" y="1416.29" width="108" height="2.99" fill="#b0b0b0"/>
<rect x="1468" y="1419.28" width="108" height="17.92" fill="#888888"/>
<rect x="1468" y="1437.20" width="108" height="2.99" fill="#b3b3b3"/>
<rect x="1468" y="1440.19" width="108" height="14.44" fill="#9c9c9c"/>
<rect x="1468" y="1454.62" width="108" height="1.49" fill="#b5b5b5"/>
<rect x="1468" y="1456.12" width="108" height="17.42" fill="#cacaca"/>
<rect x="1468" y="1473.54" width="108" height="8.96" fill="#ffffff"/>
<rect x="1468" y="1482.50" width="108" height="1.00" fill="#b5b5b5"/>
<rect x="1468" y="1483.50" width="108" height="17.92" fill="#cbcbcb"/>
<rect x="1468" y="1501.42" width="108" height="2.99" fill="#a8a8a8"/>
<rect x="1468" y="1504.41" width="108" height="15.93" fill="#c9c9c9"/>
<rect x="1468" y="1520.34" width="108" height="2.99" fill="#a8a8a8"/>
<rect x="1468" y="1523.32" width="108" height="17.42" fill="#e3e3e3"/>
<rect x="1468" y="1540.75" width="108" height="2.99" fill="#b0b0b0"/>
<rect x="1468" y="1543.73" width="108" height="8.96" fill="#e0e0e0"/>
<rect x="1468" y="1552.69" width="108" height="2.99" fill="#bdbdbd"/>
<rect x="1468" y="1555.68" width="108" height="28.87" fill="#b1b1b1"/>
<rect x="1468" y="1584.55" width="108" height="5.97" fill="#a0a0a0"/>
<rect x="1468" y="1590.53" width="108" height="5.97" fill="#8a8a8a"/>
<rect x="1468" y="1369.5" width="108" height="227" fill="url(#kedge)"/>
</g>
<text x="1487.8" y="1623.8" font-size="22.09" fill="#fff" stroke="#fff" stroke-width="0.24" textLength="57.8" lengthAdjust="spacingAndGlyphs">CH 06</text>
<rect x="1390" y="697" width="1" height="74" fill="#10131a" />
<rect x="1390" y="771" width="1" height="857" fill="#151a21" />
<rect x="1669" y="697" width="277" height="74" fill="#dcdcdc" />
<text x="1779.3" y="742.4" font-size="23.11" fill="#000" stroke="#000" stroke-width="0.25" textLength="57.2" lengthAdjust="spacingAndGlyphs">CH 07</text>
<rect x="1669" y="771" width="277" height="33" fill="#655957" />
<rect x="1671.5" y="773.5" width="272.0" height="28.0" fill="#282a30" />
<rect x="1807.5" y="773" width="1.5" height="29" fill="#e8e8e8" />
<rect x="1669" y="804" width="277" height="56" fill="#4b4d5c" />
<rect x="1671" y="806" width="273" height="52" fill="#581818" />
<text x="1777.8" y="840.3" font-size="23.40" fill="#f0f0f0" stroke="#f0f0f0" stroke-width="0.26" textLength="58.7" lengthAdjust="spacingAndGlyphs">MUTE</text>
<rect x="1669" y="860" width="277" height="768" fill="#282a30" />
<rect x="1780.60" y="871.60" width="5.00" height="2.00" fill="#fff" style="shape-rendering:auto"/>
<ellipse cx="1792.80" cy="873.20" rx="4.10" ry="5.40" fill="none" stroke="#fff" stroke-width="2.20"/>
<ellipse cx="1802.50" cy="873.20" rx="4.10" ry="5.40" fill="none" stroke="#fff" stroke-width="2.20"/>
<rect x="1920" y="860" width="7" height="17" fill="#6b1818" />
<rect x="1920" y="877" width="7" height="212" fill="#6f4016" />
<rect x="1920" y="1089" width="7" height="523" fill="#283a1a" />
<rect x="1937" y="860" width="9" height="163" fill="#f81f16" />
<rect x="1937" y="1097" width="9" height="162" fill="#f81f16" />
<rect x="1790" y="1007" width="23" height="362" fill="#000" />
<rect x="1728" y="1006" width="148" height="1" fill="#a8a8a8" />
<text x="1673.9" y="1009.4" font-size="15.99" fill="#8e8e8e" stroke="#8e8e8e" stroke-width="0.18" textLength="15.5" lengthAdjust="spacingAndGlyphs">10</text>
<rect x="1728" y="1065" width="148" height="1" fill="#a8a8a8" />
<text x="1677.7" y="1068.4" font-size="15.99" fill="#8e8e8e" stroke="#8e8e8e" stroke-width="0.18" textLength="7.7" lengthAdjust="spacingAndGlyphs">5</text>
<rect x="1728" y="1125" width="148" height="2" fill="#e8e8e8" />
<text x="1677.7" y="1128.5" font-size="15.99" fill="#8e8e8e" stroke="#8e8e8e" stroke-width="0.18" textLength="7.7" lengthAdjust="spacingAndGlyphs">0</text>
<rect x="1728" y="1185" width="148" height="1" fill="#a8a8a8" />
<text x="1675.4" y="1188.0" font-size="15.99" fill="#8e8e8e" stroke="#8e8e8e" stroke-width="0.18" textLength="12.4" lengthAdjust="spacingAndGlyphs">-5</text>
<rect x="1728" y="1244" width="148" height="1" fill="#a8a8a8" />
<text x="1671.5" y="1247.5" font-size="15.99" fill="#8e8e8e" stroke="#8e8e8e" stroke-width="0.18" textLength="20.1" lengthAdjust="spacingAndGlyphs">-10</text>
<rect x="1728" y="1304" width="148" height="1" fill="#a8a8a8" />
<text x="1671.5" y="1307.0" font-size="15.99" fill="#8e8e8e" stroke="#8e8e8e" stroke-width="0.18" textLength="20.1" lengthAdjust="spacingAndGlyphs">-20</text>
<rect x="1728" y="1363" width="148" height="1" fill="#a8a8a8" />
<text x="1671.5" y="1366.5" font-size="15.99" fill="#8e8e8e" stroke="#8e8e8e" stroke-width="0.18" textLength="20.1" lengthAdjust="spacingAndGlyphs">-30</text>
<rect x="1728" y="1423" width="148" height="1" fill="#a8a8a8" />
<text x="1671.5" y="1426.0" font-size="15.99" fill="#8e8e8e" stroke="#8e8e8e" stroke-width="0.18" textLength="20.1" lengthAdjust="spacingAndGlyphs">-50</text>
<rect x="1854.0" y="1392.2" width="17.3" height="181.6" rx="8.6" fill="url(#shd)" style="shape-rendering:auto"/>
<clipPath id="kc8"><rect x="1746" y="1369.5" width="108" height="227" rx="5.0" style="shape-rendering:auto"/></clipPath>
<g clip-path="url(#kc8)">
<rect x="1746" y="1369.5" width="108" height="227" fill="#b1b1b1"/>
<rect x="1746" y="1369.50" width="108" height="2.99" fill="#7e7e7e"/>
<rect x="1746" y="1372.49" width="108" height="4.98" fill="#a4a4a4"/>
<rect x="1746" y="1377.46" width="108" height="26.38" fill="#cbcbcb"/>
<rect x="1746" y="1403.85" width="108" height="4.48" fill="#bababa"/>
<rect x="1746" y="1408.33" width="108" height="7.96" fill="#8b8b8b"/>
<rect x="1746" y="1416.29" width="108" height="2.99" fill="#b0b0b0"/>
<rect x="1746" y="1419.28" width="108" height="17.92" fill="#888888"/>
<rect x="1746" y="1437.20" width="108" height="2.99" fill="#b3b3b3"/>
<rect x="1746" y="1440.19" width="108" height="14.44" fill="#9c9c9c"/>
<rect x="1746" y="1454.62" width="108" height="1.49" fill="#b5b5b5"/>
<rect x="1746" y="1456.12" width="108" height="17.42" fill="#cacaca"/>
<rect x="1746" y="1473.54" width="108" height="8.96" fill="#ffffff"/>
<rect x="1746" y="1482.50" width="108" height="1.00" fill="#b5b5b5"/>
<rect x="1746" y="1483.50" width="108" height="17.92" fill="#cbcbcb"/>
<rect x="1746" y="1501.42" width="108" height="2.99" fill="#a8a8a8"/>
<rect x="1746" y="1504.41" width="108" height="15.93" fill="#c9c9c9"/>
<rect x="1746" y="1520.34" width="108" height="2.99" fill="#a8a8a8"/>
<rect x="1746" y="1523.32" width="108" height="17.42" fill="#e3e3e3"/>
<rect x="1746" y="1540.75" width="108" height="2.99" fill="#b0b0b0"/>
<rect x="1746" y="1543.73" width="108" height="8.96" fill="#e0e0e0"/>
<rect x="1746" y="1552.69" width="108" height="2.99" fill="#bdbdbd"/>
<rect x="1746" y="1555.68" width="108" height="28.87" fill="#b1b1b1"/>
<rect x="1746" y="1584.55" width="108" height="5.97" fill="#a0a0a0"/>
<rect x="1746" y="1590.53" width="108" height="5.97" fill="#8a8a8a"/>
<rect x="1746" y="1369.5" width="108" height="227" fill="url(#kedge)"/>
</g>
<text x="1765.8" y="1623.8" font-size="22.09" fill="#fff" stroke="#fff" stroke-width="0.24" textLength="57.8" lengthAdjust="spacingAndGlyphs">CH 07</text>
<rect x="1668" y="697" width="1" height="74" fill="#10131a" />
<rect x="1668" y="771" width="1" height="857" fill="#151a21" />
<rect x="1947" y="697" width="277" height="74" fill="#dcdcdc" />
<text x="2057.3" y="742.4" font-size="23.11" fill="#000" stroke="#000" stroke-width="0.25" textLength="57.2" lengthAdjust="spacingAndGlyphs">CH 08</text>
<rect x="1947" y="771" width="277" height="33" fill="#655957" />
<rect x="1949.5" y="773.5" width="272.0" height="28.0" fill="#282a30" />
<rect x="2085.5" y="773" width="1.5" height="29" fill="#e8e8e8" />
<rect x="1947" y="804" width="277" height="56" fill="#4b4d5c" />
<rect x="1949" y="806" width="273" height="52" fill="#581818" />
<text x="2055.8" y="840.3" font-size="23.40" fill="#f0f0f0" stroke="#f0f0f0" stroke-width="0.26" textLength="58.7" lengthAdjust="spacingAndGlyphs">MUTE</text>
<rect x="1947" y="860" width="277" height="768" fill="#282a30" />
<rect x="2058.60" y="871.60" width="5.00" height="2.00" fill="#fff" style="shape-rendering:auto"/>
<ellipse cx="2070.80" cy="873.20" rx="4.10" ry="5.40" fill="none" stroke="#fff" stroke-width="2.20"/>
<ellipse cx="2080.50" cy="873.20" rx="4.10" ry="5.40" fill="none" stroke="#fff" stroke-width="2.20"/>
<rect x="2198" y="860" width="7" height="17" fill="#6b1818" />
<rect x="2198" y="877" width="7" height="212" fill="#6f4016" />
<rect x="2198" y="1089" width="7" height="523" fill="#283a1a" />
<rect x="2215" y="860" width="9" height="163" fill="#f81f16" />
<rect x="2215" y="1097" width="9" height="162" fill="#f81f16" />
<rect x="2068" y="1007" width="23" height="362" fill="#000" />
<rect x="2006" y="1006" width="148" height="1" fill="#a8a8a8" />
<text x="1951.9" y="1009.4" font-size="15.99" fill="#8e8e8e" stroke="#8e8e8e" stroke-width="0.18" textLength="15.5" lengthAdjust="spacingAndGlyphs">10</text>
<rect x="2006" y="1065" width="148" height="1" fill="#a8a8a8" />
<text x="1955.7" y="1068.4" font-size="15.99" fill="#8e8e8e" stroke="#8e8e8e" stroke-width="0.18" textLength="7.7" lengthAdjust="spacingAndGlyphs">5</text>
<rect x="2006" y="1125" width="148" height="2" fill="#e8e8e8" />
<text x="1955.7" y="1128.5" font-size="15.99" fill="#8e8e8e" stroke="#8e8e8e" stroke-width="0.18" textLength="7.7" lengthAdjust="spacingAndGlyphs">0</text>
<rect x="2006" y="1185" width="148" height="1" fill="#a8a8a8" />
<text x="1953.4" y="1188.0" font-size="15.99" fill="#8e8e8e" stroke="#8e8e8e" stroke-width="0.18" textLength="12.4" lengthAdjust="spacingAndGlyphs">-5</text>
<rect x="2006" y="1244" width="148" height="1" fill="#a8a8a8" />
<text x="1949.5" y="1247.5" font-size="15.99" fill="#8e8e8e" stroke="#8e8e8e" stroke-width="0.18" textLength="20.1" lengthAdjust="spacingAndGlyphs">-10</text>
<rect x="2006" y="1304" width="148" height="1" fill="#a8a8a8" />
<text x="1949.5" y="1307.0" font-size="15.99" fill="#8e8e8e" stroke="#8e8e8e" stroke-width="0.18" textLength="20.1" lengthAdjust="spacingAndGlyphs">-20</text>
<rect x="2006" y="1363" width="148" height="1" fill="#a8a8a8" />
<text x="1949.5" y="1366.5" font-size="15.99" fill="#8e8e8e" stroke="#8e8e8e" stroke-width="0.18" textLength="20.1" lengthAdjust="spacingAndGlyphs">-30</text>
<rect x="2006" y="1423" width="148" height="1" fill="#a8a8a8" />
<text x="1949.5" y="1426.0" font-size="15.99" fill="#8e8e8e" stroke="#8e8e8e" stroke-width="0.18" textLength="20.1" lengthAdjust="spacingAndGlyphs">-50</text>
<rect x="2132.0" y="1392.2" width="17.3" height="181.6" rx="8.6" fill="url(#shd)" style="shape-rendering:auto"/>
<clipPath id="kc9"><rect x="2024" y="1369.5" width="108" height="227" rx="5.0" style="shape-rendering:auto"/></clipPath>
<g clip-path="url(#kc9)">
<rect x="2024" y="1369.5" width="108" height="227" fill="#b1b1b1"/>
<rect x="2024" y="1369.50" width="108" height="2.99" fill="#7e7e7e"/>
<rect x="2024" y="1372.49" width="108" height="4.98" fill="#a4a4a4"/>
<rect x="2024" y="1377.46" width="108" height="26.38" fill="#cbcbcb"/>
<rect x="2024" y="1403.85" width="108" height="4.48" fill="#bababa"/>
<rect x="2024" y="1408.33" width="108" height="7.96" fill="#8b8b8b"/>
<rect x="2024" y="1416.29" width="108" height="2.99" fill="#b0b0b0"/>
<rect x="2024" y="1419.28" width="108" height="17.92" fill="#888888"/>
<rect x="2024" y="1437.20" width="108" height="2.99" fill="#b3b3b3"/>
<rect x="2024" y="1440.19" width="108" height="14.44" fill="#9c9c9c"/>
<rect x="2024" y="1454.62" width="108" height="1.49" fill="#b5b5b5"/>
<rect x="2024" y="1456.12" width="108" height="17.42" fill="#cacaca"/>
<rect x="2024" y="1473.54" width="108" height="8.96" fill="#ffffff"/>
<rect x="2024" y="1482.50" width="108" height="1.00" fill="#b5b5b5"/>
<rect x="2024" y="1483.50" width="108" height="17.92" fill="#cbcbcb"/>
<rect x="2024" y="1501.42" width="108" height="2.99" fill="#a8a8a8"/>
<rect x="2024" y="1504.41" width="108" height="15.93" fill="#c9c9c9"/>
<rect x="2024" y="1520.34" width="108" height="2.99" fill="#a8a8a8"/>
<rect x="2024" y="1523.32" width="108" height="17.42" fill="#e3e3e3"/>
<rect x="2024" y="1540.75" width="108" height="2.99" fill="#b0b0b0"/>
<rect x="2024" y="1543.73" width="108" height="8.96" fill="#e0e0e0"/>
<rect x="2024" y="1552.69" width="108" height="2.99" fill="#bdbdbd"/>
<rect x="2024" y="1555.68" width="108" height="28.87" fill="#b1b1b1"/>
<rect x="2024" y="1584.55" width="108" height="5.97" fill="#a0a0a0"/>
<rect x="2024" y="1590.53" width="108" height="5.97" fill="#8a8a8a"/>
<rect x="2024" y="1369.5" width="108" height="227" fill="url(#kedge)"/>
</g>
<text x="2043.8" y="1623.8" font-size="22.09" fill="#fff" stroke="#fff" stroke-width="0.24" textLength="57.8" lengthAdjust="spacingAndGlyphs">CH 08</text>
<rect x="1946" y="697" width="1" height="74" fill="#10131a" />
<rect x="1946" y="771" width="1" height="857" fill="#151a21" />
</g>
</svg>
</body></html>
